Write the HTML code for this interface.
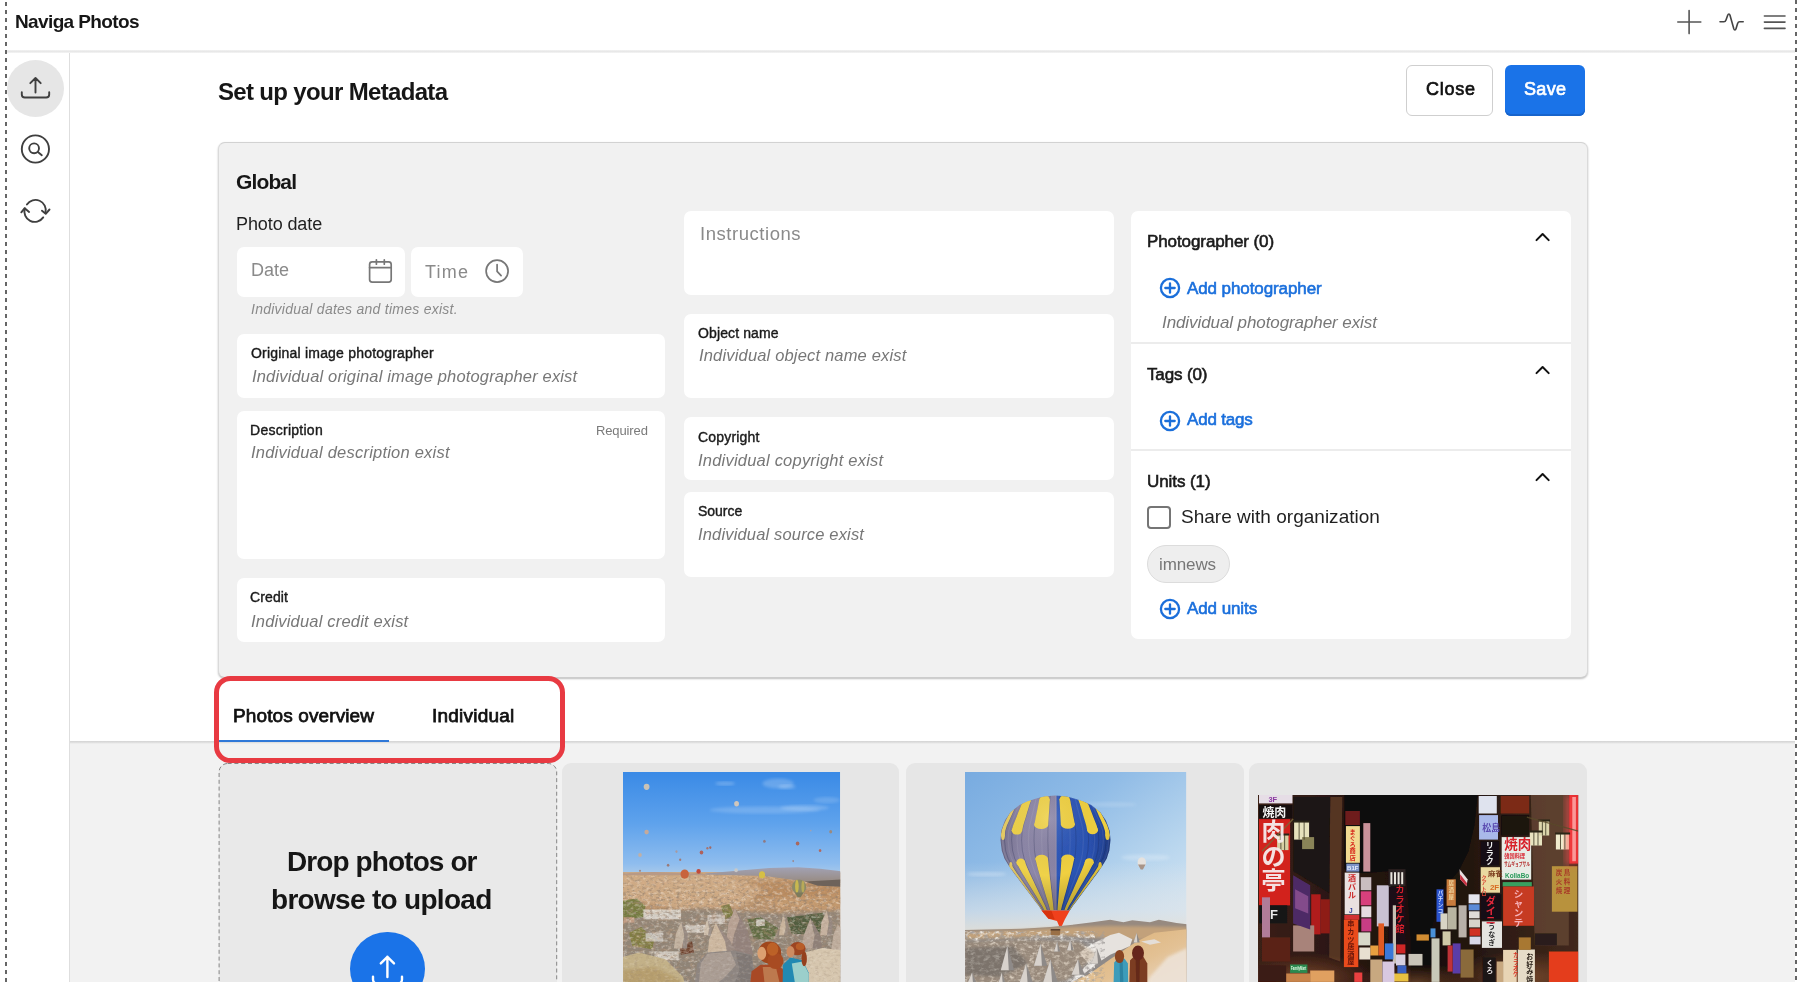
<!DOCTYPE html>
<html lang="en"><head><meta charset="utf-8"><title>Naviga Photos</title>
<style>
*{box-sizing:border-box;margin:0;padding:0}
html,body{width:1798px;height:982px;overflow:hidden;background:#fff}
body{position:relative;font-family:"Liberation Sans","Noto Sans CJK JP",sans-serif;color:#1f1f1f}
.t{position:absolute;white-space:nowrap;line-height:1;display:block;will-change:transform}
.b{position:absolute}
.w{position:absolute;background:#fff;border-radius:7px}
svg{position:absolute;overflow:visible}
</style></head>
<body>
<!-- chrome -->
<div class="b" style="left:0px;top:0px;width:1798px;height:50px;background:#fff"></div><div class="b" style="left:7px;top:50px;width:1788px;height:3px;background:linear-gradient(#f3f3f3,#e7e7e7 45%,#e9e9e9 60%,#f6f6f6)"></div><span class="t" id="title" style="left:14.80px;top:11.96px;font-size:19px;color:#161616;font-weight:700;letter-spacing:-0.624px;">Naviga Photos</span><div class="b" style="left:69px;top:53px;width:1px;height:929px;background:#dedede"></div><div class="b" style="left:7.3px;top:59.7px;width:57px;height:57px;background:#e6e6e6;border-radius:50%"></div><svg style="left:20px;top:76px" width="31" height="24" viewBox="0 0 31 24" fill="none" stroke="#3f3f3f" stroke-width="1.9" stroke-linecap="round" stroke-linejoin="round"><path d="M15.5 16.5V2.2M10.3 7.2l5.2-5.2 5.2 5.2M1.8 16.3v2.2a3 3 0 0 0 3 3h21.4a3 3 0 0 0 3-3v-2.2"/></svg><svg style="left:20px;top:134px" width="30" height="30" viewBox="0 0 30 30" fill="none" stroke="#3f3f3f" stroke-width="1.9" stroke-linecap="round"><circle cx="15.4" cy="15" r="13.6"/><circle cx="14.1" cy="14.3" r="4.9"/><path d="M17.9 18l3.9 3.2"/></svg><svg style="left:20px;top:198px" width="31" height="25" viewBox="0 0 31 25" fill="none" stroke="#3f3f3f" stroke-width="1.9" stroke-linecap="round" stroke-linejoin="round"><path d="M6.9 6.5A10.3 10.3 0 0 1 25.5 14.6M23.2 19.4A10.3 10.3 0 0 1 4.9 10.4"/><path d="M22 12.7l3.7 3.1 3.8-4.3M1.3 14.3l3.4-4.1 4.4 3.7"/></svg><svg style="left:1676px;top:9px" width="27" height="27" viewBox="0 0 27 27" fill="none" stroke="#555" stroke-width="1.6" stroke-linecap="round"><path d="M13.1 1.6v23M1.8 13h23"/></svg><svg style="left:1718px;top:11px" width="28" height="22" viewBox="0 0 28 22" fill="none" stroke="#444" stroke-width="1.6" stroke-linecap="round" stroke-linejoin="round"><path d="M2 10.8h3.9c1.2 0 1.7-.6 2.1-1.8l1.7-4.8c.6-1.6 1.8-1.6 2.3 0l3.8 13.6c.5 1.6 1.7 1.6 2.2 0l1.6-5.2c.4-1.2.9-1.8 2-1.8h3.6"/></svg><svg style="left:1762px;top:13px" width="26" height="18" viewBox="0 0 26 18" fill="none" stroke="#555" stroke-width="1.6" stroke-linecap="round"><path d="M2.4 3h20.6M2.4 9.1h20.6M2.4 15.4h20.6"/></svg><span class="t" id="h1" style="left:217.80px;top:79.60px;font-size:24px;color:#161616;font-weight:700;letter-spacing:-0.669px;">Set up your Metadata</span><div class="b" style="left:1406px;top:65px;width:86.5px;height:51px;background:#fff;border:1px solid #cfcfcf;border-radius:6px"></div><span class="t" id="close" style="left:1425.60px;top:80.35px;font-size:18px;color:#111;letter-spacing:0.742px;-webkit-text-stroke:0.7px #111;">Close</span><div class="b" style="left:1505px;top:65px;width:80px;height:51px;background:#1a73e8;border-radius:6px;box-shadow:inset 0 -2px 0 #1764cc"></div><span class="t" id="save" style="left:1524.20px;top:80.35px;font-size:18px;color:#fff;letter-spacing:0.323px;-webkit-text-stroke:0.7px #fff;">Save</span>
<!-- panel -->
<div class="b" style="left:218px;top:141.5px;width:1369.5px;height:536.7px;background:#f1f1f1;border:1px solid #dadada;border-top-color:#d2d2d2;border-bottom-color:#cdcdcd;border-radius:7px;box-shadow:0 1px 2px rgba(0,0,0,.26)"></div><span class="t" id="global" style="left:236.30px;top:171.48px;font-size:21px;color:#161616;font-weight:700;letter-spacing:-0.869px;">Global</span><span class="t" id="photodate" style="left:236.30px;top:215.25px;font-size:18px;color:#1f1f1f;letter-spacing:-0.098px;">Photo date</span><div class="w" style="left:237px;top:247.3px;width:168.2px;height:49.9px;"></div><span class="t" id="date" style="left:250.70px;top:260.95px;font-size:18px;color:#8a8a8a;letter-spacing:0.023px;">Date</span><svg style="left:368px;top:258px" width="25" height="26" viewBox="0 0 25 26" fill="none" stroke="#777" stroke-width="1.7" stroke-linecap="round" stroke-linejoin="round"><rect x="1.6" y="3.8" width="21.6" height="20.4" rx="2.6"/><path d="M1.6 9.6h21.6M8.4 1.8v4.4M16.3 1.8v4.4"/></svg><div class="w" style="left:410.8px;top:247.3px;width:111.8px;height:49.9px;"></div><span class="t" id="time" style="left:425.10px;top:262.55px;font-size:18px;color:#8a8a8a;letter-spacing:1.219px;">Time</span><svg style="left:484px;top:258px" width="26" height="26" viewBox="0 0 26 26" fill="none" stroke="#777" stroke-width="1.7" stroke-linecap="round" stroke-linejoin="round"><circle cx="13.1" cy="13.1" r="11"/><path d="M13.1 6.6v6.8l4 4.2"/></svg><span class="t" id="helper" style="left:250.70px;top:301.72px;font-size:14px;color:#8a8a8a;font-style:italic;letter-spacing:0.255px;">Individual dates and times exist.</span><div class="w" style="left:237px;top:334.4px;width:428.2px;height:63.4px;"></div><span class="t" id="l_orig" style="left:250.70px;top:346.42px;font-size:14px;color:#1a1a1a;letter-spacing:0.202px;-webkit-text-stroke:0.4px #1a1a1a;">Original image photographer</span><span class="t" id="v_orig" style="left:251.60px;top:368.19px;font-size:16.5px;color:#777;font-style:italic;letter-spacing:0.159px;">Individual original image photographer exist</span><div class="w" style="left:237px;top:410.8px;width:428.2px;height:148.1px;"></div><span class="t" id="l_desc" style="left:250.30px;top:422.72px;font-size:14px;color:#1a1a1a;letter-spacing:0.267px;-webkit-text-stroke:0.4px #1a1a1a;">Description</span><span class="t" id="req" style="left:595.80px;top:424.31px;font-size:13px;color:#7a7a7a;letter-spacing:-0.124px;">Required</span><span class="t" id="v_desc" style="left:251.30px;top:444.09px;font-size:16.5px;color:#777;font-style:italic;letter-spacing:0.218px;">Individual description exist</span><div class="w" style="left:237px;top:577.8px;width:428.2px;height:64.2px;"></div><span class="t" id="l_cred" style="left:250.30px;top:590.12px;font-size:14px;color:#1a1a1a;letter-spacing:0.108px;-webkit-text-stroke:0.4px #1a1a1a;">Credit</span><span class="t" id="v_cred" style="left:251.30px;top:613.29px;font-size:16.5px;color:#777;font-style:italic;letter-spacing:0.183px;">Individual credit exist</span><div class="w" style="left:684px;top:211.2px;width:430.2px;height:83.9px;"></div><span class="t" id="instr" style="left:700.30px;top:224.81px;font-size:18.5px;color:#8a8a8a;letter-spacing:0.545px;">Instructions</span><div class="w" style="left:684px;top:313.9px;width:430.2px;height:84.5px;"></div><span class="t" id="l_obj" style="left:697.90px;top:326.12px;font-size:14px;color:#1a1a1a;letter-spacing:0.113px;-webkit-text-stroke:0.4px #1a1a1a;">Object name</span><span class="t" id="v_obj" style="left:699.00px;top:347.09px;font-size:16.5px;color:#777;font-style:italic;letter-spacing:0.170px;">Individual object name exist</span><div class="w" style="left:684px;top:417.1px;width:430.2px;height:63.2px;"></div><span class="t" id="l_copy" style="left:697.90px;top:429.52px;font-size:14px;color:#1a1a1a;letter-spacing:0.185px;-webkit-text-stroke:0.4px #1a1a1a;">Copyright</span><span class="t" id="v_copy" style="left:698.20px;top:451.79px;font-size:16.5px;color:#777;font-style:italic;letter-spacing:0.213px;">Individual copyright exist</span><div class="w" style="left:684px;top:492.1px;width:430.2px;height:84.5px;"></div><span class="t" id="l_src" style="left:697.90px;top:504.42px;font-size:14px;color:#1a1a1a;letter-spacing:-0.012px;-webkit-text-stroke:0.4px #1a1a1a;">Source</span><span class="t" id="v_src" style="left:698.30px;top:526.49px;font-size:16.5px;color:#777;font-style:italic;letter-spacing:0.162px;">Individual source exist</span><div class="w" style="left:1131.2px;top:210.7px;width:439.4px;height:428.2px;"></div><div class="b" style="left:1131.2px;top:342px;width:439.4px;height:1.6px;background:#ececec"></div><div class="b" style="left:1131.2px;top:449px;width:439.4px;height:1.6px;background:#ececec"></div><span class="t" id="h_ph" style="left:1146.50px;top:232.94px;font-size:17px;color:#1a1a1a;letter-spacing:-0.095px;-webkit-text-stroke:0.6px #1a1a1a;">Photographer (0)</span><svg style="left:1534px;top:231.4px" width="17" height="11" viewBox="0 0 17 11" fill="none" stroke="#111" stroke-width="2" stroke-linecap="round" stroke-linejoin="round"><path d="M2.5 9.1l6.1-6.1 6.1 6.1"/></svg><svg style="left:1158.8px;top:277px" width="22" height="22" viewBox="0 0 22 22" fill="none" stroke="#1b6fda" stroke-width="2.3" stroke-linecap="round"><circle cx="11" cy="11" r="9.1"/><path d="M11 6.3v9.4M6.3 11h9.4"/></svg><span class="t" id="a_ph" style="left:1186.60px;top:279.84px;font-size:17px;color:#1a6fdc;letter-spacing:-0.094px;-webkit-text-stroke:0.6px #1a6fdc;">Add photographer</span><span class="t" id="v_ph" style="left:1162.00px;top:314.14px;font-size:17px;color:#777;font-style:italic;letter-spacing:-0.088px;">Individual photographer exist</span><span class="t" id="h_tags" style="left:1146.50px;top:365.64px;font-size:17px;color:#1a1a1a;letter-spacing:-0.146px;-webkit-text-stroke:0.6px #1a1a1a;">Tags (0)</span><svg style="left:1534px;top:364.2px" width="17" height="11" viewBox="0 0 17 11" fill="none" stroke="#111" stroke-width="2" stroke-linecap="round" stroke-linejoin="round"><path d="M2.5 9.1l6.1-6.1 6.1 6.1"/></svg><svg style="left:1158.8px;top:409.8px" width="22" height="22" viewBox="0 0 22 22" fill="none" stroke="#1b6fda" stroke-width="2.3" stroke-linecap="round"><circle cx="11" cy="11" r="9.1"/><path d="M11 6.3v9.4M6.3 11h9.4"/></svg><span class="t" id="a_tags" style="left:1186.60px;top:411.44px;font-size:17px;color:#1a6fdc;letter-spacing:-0.201px;-webkit-text-stroke:0.6px #1a6fdc;">Add tags</span><span class="t" id="h_units" style="left:1146.50px;top:473.34px;font-size:17px;color:#1a1a1a;letter-spacing:-0.079px;-webkit-text-stroke:0.6px #1a1a1a;">Units (1)</span><svg style="left:1534px;top:471.4px" width="17" height="11" viewBox="0 0 17 11" fill="none" stroke="#111" stroke-width="2" stroke-linecap="round" stroke-linejoin="round"><path d="M2.5 9.1l6.1-6.1 6.1 6.1"/></svg><div class="b" style="left:1147.2px;top:506.2px;width:23.6px;height:22.8px;border:2px solid #757575;border-radius:4px;background:#fff"></div><span class="t" id="share" style="left:1180.70px;top:507.36px;font-size:19px;color:#1f1f1f;letter-spacing:0.015px;">Share with organization</span><div class="b" style="left:1147.3px;top:544.9px;width:82.4px;height:38px;background:#eee;border:1px solid #dcdcdc;border-radius:19px"></div><span class="t" id="chip" style="left:1158.80px;top:556.14px;font-size:17px;color:#777;letter-spacing:-0.105px;">imnews</span><svg style="left:1158.8px;top:598.2px" width="22" height="22" viewBox="0 0 22 22" fill="none" stroke="#1b6fda" stroke-width="2.3" stroke-linecap="round"><circle cx="11" cy="11" r="9.1"/><path d="M11 6.3v9.4M6.3 11h9.4"/></svg><span class="t" id="a_units" style="left:1186.60px;top:599.84px;font-size:17px;color:#1a6fdc;letter-spacing:-0.086px;-webkit-text-stroke:0.6px #1a6fdc;">Add units</span>
<!-- bottom -->
<div class="b" style="left:70px;top:742px;width:1725px;height:240px;background:#f2f2f2"></div><div class="b" style="left:70px;top:741px;width:1725px;height:3.4px;background:linear-gradient(#d4d4d4,#dcdcdc 40%,#e9e9e9 75%,#f2f2f2)"></div><span class="t" id="tab1" style="left:233.00px;top:706.26px;font-size:19px;color:#111;letter-spacing:0.114px;-webkit-text-stroke:0.75px #111;">Photos overview</span><span class="t" id="tab2" style="left:431.90px;top:706.26px;font-size:19px;color:#111;letter-spacing:0.213px;-webkit-text-stroke:0.75px #111;">Individual</span><div class="b" style="left:218.6px;top:739.6px;width:170.1px;height:2px;background:#2f78d8"></div><div class="b" style="left:214.2px;top:675.9px;width:350.7px;height:86.9px;border:5px solid #e83a42;border-radius:16.5px"></div><div class="b" style="left:218.6px;top:763.4px;width:338.6px;height:230px;background:#e9e9e9;border-radius:9px"></div><svg style="left:218px;top:763px" width="340" height="230" viewBox="0 0 340 230" fill="none"><rect x="1.1" y="0.5" width="337.6" height="240" rx="8.5" stroke="#858585" stroke-width="1" stroke-dasharray="4 2.8"/></svg><span class="t" id="drop1" style="left:286.90px;top:847.94px;font-size:28px;color:#161616;font-weight:700;letter-spacing:-0.900px;">Drop photos or</span><span class="t" id="drop2" style="left:271.20px;top:886.34px;font-size:28px;color:#161616;font-weight:700;letter-spacing:-0.699px;">browse to upload</span><div class="b" style="left:350.3px;top:931.9px;width:74.5px;height:74.5px;background:#1a73e8;border-radius:50%"></div><svg style="left:370px;top:954px" width="35" height="34" viewBox="0 0 35 34" fill="none" stroke="#fff" stroke-width="2.4" stroke-linecap="round" stroke-linejoin="round"><path d="M17.4 23V2.8M10.8 9.4l6.6-6.6 6.6 6.6M3 22.6v3a4 4 0 0 0 4 4h21a4 4 0 0 0 4-4v-3"/></svg><div class="b" style="left:561.7px;top:763px;width:337.8px;height:230px;background:#e6e6e6;border-radius:9px"></div><div class="b" style="left:906.2px;top:763px;width:337.8px;height:230px;background:#e6e6e6;border-radius:9px"></div><div class="b" style="left:1249.2px;top:763px;width:337.8px;height:230px;background:#e6e6e6;border-radius:9px"></div>
<!-- photos -->
<svg style="left:622.8px;top:772.3px" width="217.2" height="215" viewBox="0 0 217.2 215"><defs>
<linearGradient id="p1sky" x1="0" y1="0" x2="0" y2="1"><stop offset="0" stop-color="#3a8ae6"/><stop offset=".5" stop-color="#5ea2ec"/><stop offset=".9" stop-color="#8fbdee"/><stop offset="1" stop-color="#a8c9ea"/></linearGradient>
<linearGradient id="p1town" x1="0" y1="0" x2="0" y2="1"><stop offset="0" stop-color="#caa47c"/><stop offset=".5" stop-color="#b08a66"/><stop offset="1" stop-color="#8e7c6a"/></linearGradient>
<linearGradient id="p1hill" x1="0" y1="0" x2="0" y2="1"><stop offset="0" stop-color="#a2a2b4"/><stop offset="1" stop-color="#97897e"/></linearGradient>
<filter id="p1n" x="0" y="0" width="100%" height="100%"><feTurbulence type="fractalNoise" baseFrequency=".22 .34" numOctaves="3" seed="7"/><feColorMatrix values="0 0 0 0 .98  0 0 0 0 .93  0 0 0 0 .86  0 0 0 2.6 -1.25"/><feGaussianBlur stdDeviation=".3"/></filter>
<filter id="p1d" x="0" y="0" width="100%" height="100%"><feTurbulence type="fractalNoise" baseFrequency=".26 .4" numOctaves="3" seed="21"/><feColorMatrix values="0 0 0 0 .3  0 0 0 0 .22  0 0 0 0 .16  0 0 0 2.6 -1.3"/><feGaussianBlur stdDeviation=".3"/></filter>
<filter id="p1o" x="0" y="0" width="100%" height="100%"><feTurbulence type="fractalNoise" baseFrequency=".18 .3" numOctaves="2" seed="4"/><feColorMatrix values="0 0 0 0 .78  0 0 0 0 .45  0 0 0 0 .25  0 0 0 2.4 -1.2"/><feGaussianBlur stdDeviation=".4"/></filter>
<filter id="b3"><feGaussianBlur stdDeviation=".35"/></filter>
<filter id="b8"><feGaussianBlur stdDeviation="1.6"/></filter>
<clipPath id="p1c"><rect width="217.2" height="215"/></clipPath>
</defs><g clip-path="url(#p1c)"><rect width="217.2" height="102" fill="url(#p1sky)"/><ellipse cx="102.1" cy="11.5" rx="9.9" ry="2.0" fill="#fff" opacity="0.22" filter="url(#b8)"/><ellipse cx="155.1" cy="11.5" rx="15.5" ry="4.9" fill="#fff" opacity="0.2" filter="url(#b8)"/><ellipse cx="164.0" cy="14.8" rx="8.8" ry="2.2" fill="#fff" opacity="0.22" filter="url(#b8)"/><ellipse cx="141.9" cy="38.0" rx="55.2" ry="3.5" fill="#fff" opacity="0.17" filter="url(#b8)"/><ellipse cx="181.7" cy="35.8" rx="24.3" ry="2.7" fill="#fff" opacity="0.2" filter="url(#b8)"/><ellipse cx="203.8" cy="28.1" rx="13.3" ry="3.1" fill="#fff" opacity="0.15" filter="url(#b8)"/><rect x="0.0" y="100.1" width="218.1" height="113.6" fill="url(#p1town)" /><polygon points="110.9,112.0 164.0,107.6 218.1,114.3 218.1,134.1 168.4,129.7 119.8,125.3" fill="#b88a5e" filter="url(#b8)" opacity=".85"/><polygon points="141.9,125.3 218.1,123.1 218.1,138.6 155.1,136.4" fill="#c49a70" filter="url(#b8)" opacity=".8"/><polygon points="0.0,103.2 97.7,103.2 141.9,116.5 119.8,134.1 53.5,136.4 0.0,125.3" fill="#d2b08c" filter="url(#b8)" opacity=".7"/><polygon points="0.0,143.0 75.6,136.4 155.1,140.8 218.1,138.6 218.1,213.7 0.0,213.7" fill="#8f867c" filter="url(#b8)" opacity=".85"/><polygon points="0.0,128.6 13.7,126.4 22.5,134.1 20.3,145.2 0.0,147.4" fill="#6f7a3c" filter="url(#b3)" opacity=".9"/><polygon points="6.0,160.7 18.1,155.1 31.4,167.3 29.2,177.2 9.3,173.9" fill="#7d7c3c" filter="url(#b3)" opacity=".9"/><polygon points="164.0,145.2 199.3,140.8 208.2,151.8 199.3,162.9 168.4,161.8" fill="#4d5a3a" filter="url(#b3)" opacity=".9"/><polygon points="124.2,147.4 137.5,145.2 155.1,156.2 150.7,167.3 130.8,167.3" fill="#5c6a40" filter="url(#b3)" opacity=".9"/><polygon points="97.7,134.1 106.5,131.9 110.9,143.0 102.1,147.4" fill="#7a7a40" filter="url(#b3)" opacity=".9"/><polygon points="55.7,171.7 69.0,169.5 71.2,180.6 57.9,182.8" fill="#6a3a28" filter="url(#b3)" opacity=".9"/><rect x="20.3" y="137.5" width="37.6" height="9.9" fill="#dcd8d0" filter="url(#b3)" opacity=".85"/><rect x="22.5" y="160.7" width="17.7" height="8.8" fill="#d0ccc6" filter="url(#b3)" opacity=".85"/><rect x="62.3" y="152.9" width="19.9" height="7.7" fill="#d6d0c8" filter="url(#b3)" opacity=".85"/><rect x="31.4" y="179.4" width="24.3" height="8.8" fill="#d8d2c8" filter="url(#b3)" opacity=".85"/><rect x="133.0" y="147.4" width="8.8" height="6.6" fill="#d8d4cc" filter="url(#b3)" opacity=".85"/><rect x="84.4" y="143.0" width="17.7" height="8.8" fill="#d0c8c0" filter="url(#b3)" opacity=".85"/><rect x="0.4" y="145.2" width="11.0" height="5.5" fill="#c8a088" filter="url(#b3)" opacity=".85"/><rect y="101" width="217.2" height="114" filter="url(#p1o)" opacity=".38"/><rect y="101" width="217.2" height="114" filter="url(#p1n)" opacity=".35"/><rect y="101" width="217.2" height="114" filter="url(#p1d)" opacity=".7"/><polygon points="82.2,101.4 119.8,98.3 146.3,96.1 175.0,95.2 197.1,96.8 218.1,99.2 218.1,110.9 181.7,109.4 141.9,103.9 82.2,102.5" fill="url(#p1hill)" filter="url(#b3)"/><polygon points="181.7,109.4 218.1,107.6 218.1,114.7 194.9,113.8" fill="#6d625a" filter="url(#b3)"/><polygon points="0.0,101.4 31.4,100.1 53.5,101.0 82.2,101.9 82.2,103.2 0.0,103.2" fill="#b89a86" /><polygon points="112.0,135.9 124.2,157.3 130.4,182.8 107.6,182.8 110.9,162.9 116.5,147.4" fill="#93827c" filter="url(#b3)"/><polygon points="112.0,135.9 116.5,147.4 110.9,162.9 107.6,180.6 103.2,169.5 105.4,151.8" fill="#b8a294" filter="url(#b3)"/><polygon points="92.8,150.7 107.6,169.5 113.1,182.8 104.3,182.8 102.1,169.5" fill="#9a8a82" filter="url(#b3)"/><polygon points="92.8,150.7 102.1,169.5 104.3,182.8 84.4,183.2 86.2,167.3" fill="#cdb8a0" filter="url(#b3)"/><polygon points="58.3,150.1 65.0,161.8 64.1,176.6 59.0,176.6 61.2,162.9" fill="#978a82" filter="url(#b3)"/><polygon points="58.3,150.1 61.2,162.9 59.0,176.6 50.8,176.6 53.0,161.8" fill="#c4b4a2" filter="url(#b3)"/><polygon points="84.4,147.4 88.8,156.7 88.0,163.3 84.9,163.3 86.2,156.2" fill="#a0948c" filter="url(#b3)"/><polygon points="84.4,147.4 86.2,156.2 84.9,163.3 80.9,163.3 81.3,156.2" fill="#cfc0ae" filter="url(#b3)"/><polygon points="160.9,143.0 165.3,154.5 164.4,163.3 160.9,163.3 162.7,155.1" fill="#9c8c80" filter="url(#b3)"/><polygon points="160.9,143.0 162.7,155.1 160.9,163.3 156.0,163.3 157.3,154.0" fill="#c9b49c" filter="url(#b3)"/><polygon points="187.4,146.3 197.6,163.3 198.9,176.6 189.4,176.6 191.6,162.9" fill="#8f8078" filter="url(#b3)"/><polygon points="187.4,146.3 191.6,162.9 189.4,176.6 179.0,176.6 180.8,162.9" fill="#b8a698" filter="url(#b3)"/><polygon points="203.8,138.6 209.5,150.1 208.6,163.3 203.8,163.3 206.0,150.1" fill="#968880" filter="url(#b3)"/><polygon points="203.8,138.6 206.0,150.1 203.8,163.3 197.1,163.3 198.5,150.1" fill="#c6b2a0" filter="url(#b3)"/><polygon points="217.0,155.1 218.1,158.5 218.1,178.3 215.9,178.3" fill="#95877f" filter="url(#b3)"/><polygon points="214.8,151.8 218.1,158.5 218.1,178.3 208.2,178.3 210.4,162.9" fill="#bfae9e" filter="url(#b3)"/><polygon points="71.2,213.7 74.5,191.6 84.4,180.6 110.9,178.3 128.6,182.8 134.1,213.7" fill="#8e8682" filter="url(#b3)"/><polygon points="84.4,181.7 107.6,179.4 113.1,192.7 102.1,204.9 91.0,213.7 75.6,213.7 77.8,191.6" fill="#ada096" filter="url(#b3)" opacity=".9"/><polygon points="113.1,180.6 128.6,183.2 133.0,213.7 110.9,213.7 116.5,198.2" fill="#7f7874" filter="url(#b3)"/><polygon points="0.0,185.0 15.9,180.6 42.4,187.2 60.1,204.9 62.3,213.7 0.0,213.7" fill="#c3b188" filter="url(#b3)"/><polygon points="0.0,198.2 31.4,194.9 57.9,208.2 57.9,213.7 0.0,213.7" fill="#b39a68" filter="url(#b8)" opacity=".8"/><polygon points="181.7,180.6 199.3,176.1 218.1,178.3 218.1,213.7 181.7,213.7" fill="#d6c6ae" filter="url(#b3)"/><rect y="118" width="217.2" height="97" filter="url(#p1n)" opacity=".18"/><rect y="118" width="217.2" height="97" filter="url(#p1d)" opacity=".3"/><polygon points="126.9,213.7 128.6,199.3 137.5,192.7 155.1,192.7 164.0,201.5 165.7,213.7" fill="#a84a28" filter="url(#b3)"/><polygon points="139.7,194.9 152.9,194.9 157.3,213.7 141.9,213.7" fill="#c48a5c" filter="url(#b3)" opacity=".75"/><polygon points="159.6,213.7 160.0,192.7 167.3,185.4 179.4,188.3 185.6,200.4 185.6,213.7" fill="#2089b2" filter="url(#b3)"/><polygon points="168.8,191.6 179.9,189.4 185.6,201.5 185.6,213.7 172.4,213.7" fill="#a9d8ce" filter="url(#b3)" opacity=".9"/><ellipse cx="146.7" cy="180.6" rx="11.5" ry="11.0" fill="#a0461e" filter="url(#b3)"/><ellipse cx="152.5" cy="189.0" rx="8.0" ry="8.0" fill="#a84c20" filter="url(#b3)"/><ellipse cx="149.6" cy="177.2" rx="5.7" ry="6.6" fill="#c4682c" filter="url(#b3)" opacity=".8"/><ellipse cx="138.8" cy="181.4" rx="4.4" ry="6.6" fill="#dca070" filter="url(#b3)"/><ellipse cx="174.6" cy="176.6" rx="8.0" ry="6.6" fill="#9c4420" filter="url(#b3)"/><ellipse cx="177.2" cy="174.4" rx="4.4" ry="3.5" fill="#c0642c" filter="url(#b3)" opacity=".8"/><ellipse cx="181.2" cy="186.7" rx="2.7" ry="7.5" fill="#94401e" filter="url(#b3)"/><ellipse cx="167.5" cy="179.7" rx="4.0" ry="5.7" fill="#cc8c62" filter="url(#b3)"/><ellipse cx="23.6" cy="14.8" rx="2.9" ry="3.1" fill="#c9c2b6" filter="url(#b3)"/><ellipse cx="113.6" cy="31.8" rx="2.4" ry="2.7" fill="#cfc6bc" filter="url(#b3)"/><ellipse cx="23.6" cy="60.1" rx="2.2" ry="2.4" fill="#c4aa9c" filter="url(#b3)"/><ellipse cx="17.0" cy="82.9" rx="1.8" ry="2.0" fill="#c0b0a6" filter="url(#b3)"/><ellipse cx="53.5" cy="79.6" rx="1.1" ry="1.3" fill="#a89aa0" filter="url(#b3)"/><ellipse cx="57.2" cy="87.7" rx="1.1" ry="1.3" fill="#a07a78" filter="url(#b3)"/><ellipse cx="45.1" cy="93.3" rx="1.3" ry="1.5" fill="#9a7a78" filter="url(#b3)"/><ellipse cx="78.5" cy="80.4" rx="1.8" ry="2.0" fill="#b0625c" filter="url(#b3)"/><ellipse cx="84.4" cy="76.2" rx="1.1" ry="1.3" fill="#a8746e" filter="url(#b3)"/><ellipse cx="87.3" cy="75.6" rx="1.1" ry="1.3" fill="#a06a68" filter="url(#b3)"/><ellipse cx="141.4" cy="69.2" rx="1.3" ry="1.5" fill="#8e7a84" filter="url(#b3)"/><ellipse cx="174.6" cy="71.4" rx="1.8" ry="2.0" fill="#a8685e" filter="url(#b3)"/><ellipse cx="197.1" cy="78.5" rx="1.3" ry="1.5" fill="#b06a62" filter="url(#b3)"/><ellipse cx="207.7" cy="59.7" rx="1.5" ry="1.8" fill="#9a8a80" filter="url(#b3)"/><ellipse cx="187.8" cy="58.6" rx="0.7" ry="0.9" fill="#a8a0a8" filter="url(#b3)"/><ellipse cx="170.2" cy="89.1" rx="0.9" ry="1.1" fill="#9a8a90" filter="url(#b3)"/><ellipse cx="17.0" cy="98.8" rx="1.1" ry="1.1" fill="#a08a88" filter="url(#b3)"/><ellipse cx="113.1" cy="98.3" rx="1.8" ry="2.0" fill="#c8c8c8" filter="url(#b3)"/><ellipse cx="75.6" cy="99.4" rx="2.2" ry="2.4" fill="#c0483a" filter="url(#b3)"/><ellipse cx="61.7" cy="102.1" rx="4.2" ry="4.6" fill="#c8643c" filter="url(#b3)"/><ellipse cx="139.0" cy="102.8" rx="3.1" ry="3.5" fill="#d6bf44" filter="url(#b3)"/><ellipse cx="176.1" cy="114.9" rx="7.1" ry="7.3" fill="#8c8a68" filter="url(#b3)"/><ellipse cx="173.9" cy="114.3" rx="1.8" ry="6.6" fill="#c8b850" filter="url(#b3)"/><ellipse cx="179.9" cy="114.7" rx="1.5" ry="6.2" fill="#b8aa58" filter="url(#b3)"/><polygon points="171.7,120.4 180.6,120.4 177.7,125.3 174.6,125.3" fill="#7c7a5c" /></g></svg><svg style="left:964.6px;top:772.3px" width="221.4" height="215" viewBox="0 0 221.4 215"><defs>
<linearGradient id="p2sky" x1="0" y1="0" x2="1" y2="1" gradientUnits="objectBoundingBox"><stop offset="0" stop-color="#78abe0"/><stop offset=".35" stop-color="#8fbbe6"/><stop offset=".7" stop-color="#b9d6ee"/><stop offset="1" stop-color="#dbe9f4"/></linearGradient>
<linearGradient id="p2haze" x1="0" y1="0" x2="0" y2="1"><stop offset="0" stop-color="#e4e6e6" stop-opacity="0"/><stop offset=".7" stop-color="#dde3e8" stop-opacity=".6"/><stop offset="1" stop-color="#e2dfd8" stop-opacity=".9"/></linearGradient>
<linearGradient id="p2env" x1="0" y1="0" x2="1" y2="0"><stop offset="0" stop-color="#77728f"/><stop offset=".2" stop-color="#8d87a8"/><stop offset=".505" stop-color="#8a84a6"/><stop offset=".515" stop-color="#2d58ba"/><stop offset=".8" stop-color="#2a52b2"/><stop offset="1" stop-color="#223f8c"/></linearGradient>
<radialGradient id="p2sh" cx=".45" cy=".2" r=".9"><stop offset="0" stop-color="#fff" stop-opacity=".12"/><stop offset=".55" stop-color="#000" stop-opacity="0"/><stop offset="1" stop-color="#000" stop-opacity=".3"/></radialGradient>
<linearGradient id="p2gold" x1="0" y1="0" x2="1" y2="1"><stop offset="0" stop-color="#d9ad70"/><stop offset=".6" stop-color="#e3c194"/><stop offset="1" stop-color="#ecdccb"/></linearGradient>
<filter id="p2n" x="0" y="0" width="100%" height="100%"><feTurbulence type="fractalNoise" baseFrequency=".2 .3" numOctaves="3" seed="11"/><feColorMatrix values="0 0 0 0 .95  0 0 0 0 .94  0 0 0 0 .92  0 0 0 2.8 -1.3"/><feGaussianBlur stdDeviation=".35"/></filter>
<filter id="p2d" x="0" y="0" width="100%" height="100%"><feTurbulence type="fractalNoise" baseFrequency=".2 .3" numOctaves="3" seed="31"/><feColorMatrix values="0 0 0 0 .36  0 0 0 0 .34  0 0 0 0 .33  0 0 0 2.8 -1.35"/><feGaussianBlur stdDeviation=".35"/></filter>
<clipPath id="p2c"><rect width="221.4" height="215"/></clipPath>
</defs><g clip-path="url(#p2c)"><rect width="221.4" height="160" fill="url(#p2sky)"/><rect y="90" width="221.4" height="68" fill="url(#p2haze)"/><ellipse cx="21.4" cy="102.1" rx="19.9" ry="2.2" fill="#fff" opacity="0.25" filter="url(#b8)"/><ellipse cx="180.6" cy="85.5" rx="24.3" ry="3.1" fill="#fff" opacity="0.22" filter="url(#b8)"/><ellipse cx="145.2" cy="32.5" rx="26.5" ry="2.2" fill="#fff" opacity="0.15" filter="url(#b8)"/><clipPath id="p2e"><polygon points="90.3,23.5 84.2,24.1 79.6,24.6 75.0,25.6 69.7,26.9 65.5,28.4 61.3,29.9 57.9,31.4 54.5,33.0 49.9,36.8 45.3,40.6 42.7,44.4 40.0,48.3 38.1,53.6 36.2,58.9 35.9,63.5 35.5,68.1 36.1,73.5 36.8,78.8 38.1,82.6 39.4,86.4 41.7,90.3 44.0,94.1 46.7,97.9 49.4,101.7 52.3,105.5 55.2,109.4 58.1,113.2 60.9,117.0 63.8,120.8 66.6,124.6 70.1,129.2 73.7,133.8 76.7,138.4 104.8,138.4 107.9,133.8 111.4,129.2 114.9,124.6 117.7,120.8 120.5,117.0 123.3,113.2 126.1,109.4 129.0,105.5 131.9,101.7 134.5,97.9 137.2,94.1 139.5,90.3 141.8,86.4 143.0,82.6 144.3,78.8 144.9,73.5 145.5,68.1 145.1,63.5 144.7,58.9 142.8,53.6 140.8,48.3 138.1,44.4 135.5,40.6 130.9,36.8 126.3,33.0 122.8,31.4 119.4,29.9 115.2,28.4 111.0,26.9 105.7,25.6 101.0,24.6 96.4,24.1 90.3,23.5"/></clipPath><g filter="url(#b3)"><polygon points="90.3,23.5 84.2,24.1 79.6,24.6 75.0,25.6 69.7,26.9 65.5,28.4 61.3,29.9 57.9,31.4 54.5,33.0 49.9,36.8 45.3,40.6 42.7,44.4 40.0,48.3 38.1,53.6 36.2,58.9 35.9,63.5 35.5,68.1 36.1,73.5 36.8,78.8 38.1,82.6 39.4,86.4 41.7,90.3 44.0,94.1 46.7,97.9 49.4,101.7 52.3,105.5 55.2,109.4 58.1,113.2 60.9,117.0 63.8,120.8 66.6,124.6 70.1,129.2 73.7,133.8 76.7,138.4 104.8,138.4 107.9,133.8 111.4,129.2 114.9,124.6 117.7,120.8 120.5,117.0 123.3,113.2 126.1,109.4 129.0,105.5 131.9,101.7 134.5,97.9 137.2,94.1 139.5,90.3 141.8,86.4 143.0,82.6 144.3,78.8 144.9,73.5 145.5,68.1 145.1,63.5 144.7,58.9 142.8,53.6 140.8,48.3 138.1,44.4 135.5,40.6 130.9,36.8 126.3,33.0 122.8,31.4 119.4,29.9 115.2,28.4 111.0,26.9 105.7,25.6 101.0,24.6 96.4,24.1 90.3,23.5" fill="url(#p2env)"/><g clip-path="url(#p2e)"><polyline points="53.2,23.5 52.9,24.1 52.7,24.6 52.2,25.6 51.6,26.9 50.8,28.4 50.1,29.9 49.3,31.4 48.6,33.0 46.7,36.8 44.8,40.6 42.9,44.4 41.0,48.3 38.5,53.6 36.6,58.9 36.3,63.5 35.9,68.1 36.5,73.5 37.2,78.8 38.5,82.6 39.8,86.4 42.1,90.3 44.4,94.1 47.0,97.9 49.7,101.7 52.6,105.5 55.5,109.4 58.3,113.2 61.1,117.0 64.0,120.8 66.8,124.6 70.3,129.2 73.8,133.8 76.8,138.4" fill="none" stroke="#1a1f4a" stroke-width=".7" opacity=".35"/><polyline points="55.7,23.5 55.4,24.1 55.2,24.6 54.7,25.6 54.1,26.9 53.4,28.4 52.7,29.9 52.0,31.4 51.3,33.0 49.6,36.8 47.8,40.6 46.0,44.4 44.3,48.3 41.9,53.6 40.2,58.9 39.8,63.5 39.5,68.1 40.1,73.5 40.7,78.8 41.9,82.6 43.1,86.4 45.3,90.3 47.4,94.1 49.9,97.9 52.4,101.7 55.1,105.5 57.8,109.4 60.4,113.2 63.1,117.0 65.7,120.8 68.3,124.6 71.6,129.2 74.9,133.8 77.8,138.4" fill="none" stroke="#1a1f4a" stroke-width=".7" opacity=".35"/><polyline points="60.5,23.5 60.2,24.1 60.0,24.6 59.6,25.6 59.1,26.9 58.5,28.4 57.9,29.9 57.3,31.4 56.7,33.0 55.2,36.8 53.7,40.6 52.2,44.4 50.7,48.3 48.7,53.6 47.2,58.9 46.9,63.5 46.6,68.1 47.1,73.5 47.6,78.8 48.7,82.6 49.7,86.4 51.6,90.3 53.4,94.1 55.5,97.9 57.7,101.7 60.0,105.5 62.4,109.4 64.6,113.2 66.9,117.0 69.2,120.8 71.5,124.6 74.3,129.2 77.1,133.8 79.6,138.4" fill="none" stroke="#1a1f4a" stroke-width=".7" opacity=".35"/><polyline points="67.3,23.5 67.1,24.1 67.0,24.6 66.7,25.6 66.3,26.9 65.8,28.4 65.4,29.9 64.9,31.4 64.4,33.0 63.3,36.8 62.1,40.6 61.0,44.4 59.8,48.3 58.2,53.6 57.1,58.9 56.9,63.5 56.6,68.1 57.0,73.5 57.4,78.8 58.3,82.6 59.1,86.4 60.5,90.3 61.9,94.1 63.6,97.9 65.2,101.7 67.0,105.5 68.8,109.4 70.6,113.2 72.4,117.0 74.1,120.8 75.9,124.6 78.0,129.2 80.2,133.8 82.1,138.4" fill="none" stroke="#1a1f4a" stroke-width=".7" opacity=".35"/><polyline points="75.7,23.5 75.6,24.1 75.5,24.6 75.3,25.6 75.1,26.9 74.8,28.4 74.5,29.9 74.2,31.4 73.9,33.0 73.2,36.8 72.4,40.6 71.7,44.4 71.0,48.3 70.0,53.6 69.3,58.9 69.1,63.5 69.0,68.1 69.3,73.5 69.5,78.8 70.1,82.6 70.6,86.4 71.5,90.3 72.4,94.1 73.5,97.9 74.5,101.7 75.7,105.5 76.8,109.4 77.9,113.2 79.1,117.0 80.2,120.8 81.3,124.6 82.7,129.2 84.1,133.8 85.3,138.4" fill="none" stroke="#1a1f4a" stroke-width=".7" opacity=".35"/><polyline points="85.1,23.5 85.1,24.1 85.1,24.6 85.0,25.6 84.9,26.9 84.8,28.4 84.7,29.9 84.6,31.4 84.5,33.0 84.3,36.8 84.0,40.6 83.7,44.4 83.5,48.3 83.2,53.6 82.9,58.9 82.9,63.5 82.8,68.1 83.0,73.5 83.1,78.8 83.3,82.6 83.5,86.4 83.8,90.3 84.1,94.1 84.5,97.9 84.9,101.7 85.3,105.5 85.7,109.4 86.1,113.2 86.6,117.0 87.0,120.8 87.4,124.6 87.9,129.2 88.4,133.8 88.8,138.4" fill="none" stroke="#1a1f4a" stroke-width=".7" opacity=".35"/><polyline points="94.9,23.5 94.9,24.1 95.0,24.6 95.0,25.6 95.1,26.9 95.2,28.4 95.3,29.9 95.4,31.4 95.5,33.0 95.7,36.8 96.0,40.6 96.2,44.4 96.5,48.3 96.8,53.6 97.1,58.9 97.1,63.5 97.2,68.1 97.2,73.5 97.1,78.8 97.0,82.6 96.8,86.4 96.5,90.3 96.3,94.1 96.0,97.9 95.7,101.7 95.3,105.5 95.0,109.4 94.7,113.2 94.3,117.0 94.0,120.8 93.7,124.6 93.3,129.2 92.9,133.8 92.5,138.4" fill="none" stroke="#1a1f4a" stroke-width=".7" opacity=".35"/><polyline points="104.3,23.5 104.4,24.1 104.5,24.6 104.7,25.6 105.0,26.9 105.3,28.4 105.6,29.9 105.8,31.4 106.1,33.0 106.9,36.8 107.6,40.6 108.3,44.4 109.1,48.3 110.0,53.6 110.8,58.9 110.9,63.5 111.1,68.1 110.9,73.5 110.7,78.8 110.2,82.6 109.7,86.4 108.9,90.3 108.1,94.1 107.1,97.9 106.1,101.7 105.0,105.5 103.9,109.4 102.9,113.2 101.9,117.0 100.8,120.8 99.8,124.6 98.5,129.2 97.2,133.8 96.0,138.4" fill="none" stroke="#1a1f4a" stroke-width=".7" opacity=".35"/><polyline points="112.8,23.5 113.0,24.1 113.1,24.6 113.5,25.6 113.8,26.9 114.3,28.4 114.8,29.9 115.2,31.4 115.7,33.0 116.9,36.8 118.0,40.6 119.2,44.4 120.4,48.3 121.9,53.6 123.1,58.9 123.4,63.5 123.6,68.1 123.3,73.5 122.9,78.8 122.1,82.6 121.4,86.4 120.0,90.3 118.6,94.1 117.1,97.9 115.5,101.7 113.7,105.5 112.0,109.4 110.3,113.2 108.6,117.0 106.9,120.8 105.3,124.6 103.2,129.2 101.1,133.8 99.2,138.4" fill="none" stroke="#1a1f4a" stroke-width=".7" opacity=".35"/><polyline points="119.8,23.5 120.0,24.1 120.2,24.6 120.6,25.6 121.1,26.9 121.7,28.4 122.3,29.9 122.9,31.4 123.6,33.0 125.1,36.8 126.6,40.6 128.1,44.4 129.6,48.3 131.7,53.6 133.2,58.9 133.5,63.5 133.8,68.1 133.4,73.5 132.9,78.8 131.9,82.6 130.9,86.4 129.1,90.3 127.3,94.1 125.2,97.9 123.1,101.7 120.9,105.5 118.6,109.4 116.4,113.2 114.2,117.0 112.0,120.8 109.7,124.6 107.0,129.2 104.2,133.8 101.9,138.4" fill="none" stroke="#1a1f4a" stroke-width=".7" opacity=".35"/><polyline points="124.7,23.5 125.0,24.1 125.2,24.6 125.7,25.6 126.3,26.9 127.0,28.4 127.7,29.9 128.4,31.4 129.1,33.0 130.9,36.8 132.7,40.6 134.5,44.4 136.2,48.3 138.6,53.6 140.4,58.9 140.8,63.5 141.1,68.1 140.6,73.5 140.0,78.8 138.9,82.6 137.7,86.4 135.6,90.3 133.5,94.1 131.1,97.9 128.6,101.7 125.9,105.5 123.3,109.4 120.7,113.2 118.1,117.0 115.5,120.8 112.9,124.6 109.7,129.2 106.5,133.8 103.7,138.4" fill="none" stroke="#1a1f4a" stroke-width=".7" opacity=".35"/><polyline points="127.3,23.5 127.7,24.1 127.9,24.6 128.4,25.6 129.0,26.9 129.8,28.4 130.5,29.9 131.3,31.4 132.1,33.0 134.0,36.8 135.9,40.6 137.8,44.4 139.7,48.3 142.3,53.6 144.2,58.9 144.6,63.5 145.0,68.1 144.4,73.5 143.8,78.8 142.5,82.6 141.3,86.4 139.0,90.3 136.7,94.1 134.1,97.9 131.5,101.7 128.6,105.5 125.8,109.4 123.0,113.2 120.2,117.0 117.4,120.8 114.6,124.6 111.2,129.2 107.7,133.8 104.7,138.4" fill="none" stroke="#1a1f4a" stroke-width=".7" opacity=".35"/><polyline points="52.9,23.5 52.6,24.1 52.4,24.6 51.9,25.6 51.3,26.9 50.5,28.4 49.8,29.9 49.0,31.4 48.2,33.0 46.4,36.8 44.5,40.6 42.6,44.4 40.7,48.3 38.1,53.6 36.2,58.9 35.9,63.5 35.5,68.1 36.1,73.5 36.8,78.8 38.1,82.6 39.4,86.4 41.7,90.3 44.0,94.1 46.7,97.9 49.4,101.7 52.3,105.5 55.2,109.4 58.1,113.2 60.9,117.0 63.8,120.8 66.6,124.6 70.1,129.2 73.7,133.8 76.7,138.4" fill="none" stroke="#fff" stroke-width="1.2" opacity=".08"/><polyline points="54.3,23.5 54.0,24.1 53.8,24.6 53.3,25.6 52.7,26.9 52.0,28.4 51.2,29.9 50.5,31.4 49.8,33.0 48.0,36.8 46.1,40.6 44.3,44.4 42.5,48.3 40.0,53.6 38.2,58.9 37.9,63.5 37.5,68.1 38.1,73.5 38.7,78.8 40.0,82.6 41.3,86.4 43.5,90.3 45.7,94.1 48.3,97.9 50.9,101.7 53.7,105.5 56.5,109.4 59.3,113.2 62.0,117.0 64.7,120.8 67.5,124.6 70.9,129.2 74.3,133.8 77.2,138.4" fill="none" stroke="#fff" stroke-width="1.2" opacity=".08"/><polyline points="58.1,23.5 57.9,24.1 57.7,24.6 57.2,25.6 56.7,26.9 56.0,28.4 55.4,29.9 54.7,31.4 54.1,33.0 52.4,36.8 50.8,40.6 49.2,44.4 47.6,48.3 45.4,53.6 43.7,58.9 43.4,63.5 43.1,68.1 43.7,73.5 44.2,78.8 45.3,82.6 46.5,86.4 48.5,90.3 50.5,94.1 52.8,97.9 55.1,101.7 57.6,105.5 60.1,109.4 62.6,113.2 65.0,117.0 67.5,120.8 69.9,124.6 73.0,129.2 76.0,133.8 78.7,138.4" fill="none" stroke="#fff" stroke-width="1.2" opacity=".08"/><polyline points="64.1,23.5 63.9,24.1 63.8,24.6 63.4,25.6 63.0,26.9 62.4,28.4 61.9,29.9 61.4,31.4 60.8,33.0 59.5,36.8 58.2,40.6 56.9,44.4 55.5,48.3 53.8,53.6 52.5,58.9 52.2,63.5 52.0,68.1 52.4,73.5 52.9,78.8 53.8,82.6 54.7,86.4 56.3,90.3 57.9,94.1 59.8,97.9 61.7,101.7 63.8,105.5 65.8,109.4 67.8,113.2 69.8,117.0 71.8,120.8 73.8,124.6 76.3,129.2 78.8,133.8 80.9,138.4" fill="none" stroke="#fff" stroke-width="1.2" opacity=".08"/><polyline points="71.9,23.5 71.8,24.1 71.7,24.6 71.4,25.6 71.1,26.9 70.7,28.4 70.4,29.9 70.0,31.4 69.6,33.0 68.7,36.8 67.8,40.6 66.8,44.4 65.9,48.3 64.7,53.6 63.8,58.9 63.6,63.5 63.4,68.1 63.7,73.5 64.1,78.8 64.7,82.6 65.4,86.4 66.5,90.3 67.7,94.1 69.0,97.9 70.3,101.7 71.8,105.5 73.2,109.4 74.6,113.2 76.0,117.0 77.4,120.8 78.8,124.6 80.6,129.2 82.3,133.8 83.9,138.4" fill="none" stroke="#fff" stroke-width="1.2" opacity=".08"/><polyline points="81.0,23.5 80.9,24.1 80.8,24.6 80.7,25.6 80.6,26.9 80.4,28.4 80.2,29.9 80.0,31.4 79.8,33.0 79.4,36.8 78.9,40.6 78.4,44.4 78.0,48.3 77.3,53.6 76.9,58.9 76.8,63.5 76.7,68.1 76.9,73.5 77.1,78.8 77.4,82.6 77.8,86.4 78.4,90.3 78.9,94.1 79.6,97.9 80.3,101.7 81.1,105.5 81.8,109.4 82.5,113.2 83.2,117.0 84.0,120.8 84.7,124.6 85.6,129.2 86.5,133.8 87.3,138.4" fill="none" stroke="#fff" stroke-width="1.2" opacity=".08"/><polyline points="90.7,23.5 90.7,24.1 90.7,24.6 90.7,25.6 90.7,26.9 90.7,28.4 90.7,29.9 90.7,31.4 90.7,33.0 90.8,36.8 90.8,40.6 90.8,44.4 90.9,48.3 90.9,53.6 90.9,58.9 91.0,63.5 91.0,68.1 91.0,73.5 91.0,78.8 91.0,82.6 91.0,86.4 91.0,90.3 91.0,94.1 91.0,97.9 91.0,101.7 91.0,105.5 91.0,109.4 91.0,113.2 91.0,117.0 90.9,120.8 90.9,124.6 90.9,129.2 90.9,133.8 90.9,138.4" fill="none" stroke="#fff" stroke-width="1.2" opacity=".08"/><polyline points="100.3,23.5 100.4,24.1 100.5,24.6 100.6,25.6 100.8,26.9 101.0,28.4 101.2,29.9 101.4,31.4 101.6,33.0 102.1,36.8 102.7,40.6 103.2,44.4 103.7,48.3 104.4,53.6 105.0,58.9 105.1,63.5 105.2,68.1 105.1,73.5 104.9,78.8 104.6,82.6 104.3,86.4 103.7,90.3 103.1,94.1 102.4,97.9 101.7,101.7 100.9,105.5 100.1,109.4 99.4,113.2 98.7,117.0 97.9,120.8 97.2,124.6 96.3,129.2 95.3,133.8 94.5,138.4" fill="none" stroke="#fff" stroke-width="1.2" opacity=".08"/><polyline points="109.3,23.5 109.5,24.1 109.6,24.6 109.9,25.6 110.2,26.9 110.6,28.4 111.0,29.9 111.3,31.4 111.7,33.0 112.7,36.8 113.7,40.6 114.7,44.4 115.7,48.3 117.0,53.6 118.0,58.9 118.2,63.5 118.4,68.1 118.1,73.5 117.8,78.8 117.2,82.6 116.6,86.4 115.4,90.3 114.3,94.1 112.9,97.9 111.6,101.7 110.1,105.5 108.7,109.4 107.2,113.2 105.8,117.0 104.4,120.8 103.0,124.6 101.2,129.2 99.4,133.8 97.9,138.4" fill="none" stroke="#fff" stroke-width="1.2" opacity=".08"/><polyline points="117.0,23.5 117.2,24.1 117.4,24.6 117.8,25.6 118.2,26.9 118.8,28.4 119.3,29.9 119.9,31.4 120.4,33.0 121.8,36.8 123.2,40.6 124.5,44.4 125.9,48.3 127.8,53.6 129.1,58.9 129.4,63.5 129.7,68.1 129.3,73.5 128.9,78.8 128.0,82.6 127.1,86.4 125.5,90.3 123.8,94.1 121.9,97.9 120.1,101.7 118.0,105.5 115.9,109.4 113.9,113.2 111.9,117.0 109.9,120.8 107.9,124.6 105.5,129.2 103.0,133.8 100.8,138.4" fill="none" stroke="#fff" stroke-width="1.2" opacity=".08"/><polyline points="122.9,23.5 123.1,24.1 123.3,24.6 123.8,25.6 124.3,26.9 125.0,28.4 125.7,29.9 126.4,31.4 127.0,33.0 128.7,36.8 130.4,40.6 132.1,44.4 133.7,48.3 136.0,53.6 137.7,58.9 138.0,63.5 138.4,68.1 137.9,73.5 137.3,78.8 136.2,82.6 135.1,86.4 133.1,90.3 131.2,94.1 128.8,97.9 126.5,101.7 124.0,105.5 121.5,109.4 119.1,113.2 116.6,117.0 114.2,120.8 111.7,124.6 108.7,129.2 105.7,133.8 103.0,138.4" fill="none" stroke="#fff" stroke-width="1.2" opacity=".08"/><polyline points="126.5,23.5 126.8,24.1 127.0,24.6 127.6,25.6 128.2,26.9 128.9,28.4 129.6,29.9 130.4,31.4 131.1,33.0 133.0,36.8 134.9,40.6 136.7,44.4 138.6,48.3 141.1,53.6 143.0,58.9 143.4,63.5 143.7,68.1 143.2,73.5 142.6,78.8 141.4,82.6 140.1,86.4 137.9,90.3 135.7,94.1 133.1,97.9 130.6,101.7 127.8,105.5 125.0,109.4 122.3,113.2 119.5,117.0 116.8,120.8 114.1,124.6 110.7,129.2 107.3,133.8 104.4,138.4" fill="none" stroke="#fff" stroke-width="1.2" opacity=".08"/><polyline points="90.3,23.5 96.4,24.1 101.0,24.6 105.7,25.6 111.0,26.9 115.2,28.4 119.4,29.9 122.8,31.4 126.3,33.0 130.9,36.8 135.5,40.6 138.1,44.4 140.8,48.3 142.8,53.6 144.7,58.9 145.1,63.5 145.5,68.1 144.9,73.5 144.3,78.8 143.0,82.6 141.8,86.4 139.5,90.3 137.2,94.1 134.5,97.9 131.9,101.7 129.0,105.5 126.1,109.4 123.3,113.2 120.5,117.0 117.7,120.8 114.9,124.6 111.4,129.2 107.9,133.8 104.8,138.4" fill="none" stroke="#fff" stroke-width="1.2" opacity=".08"/><polygon points="51.3,27.2 50.7,28.4 50.0,29.9 49.2,31.4 48.5,33.0 46.6,36.8 44.7,40.6 42.8,44.4 40.9,48.3 38.4,53.6 36.5,58.9 36.2,63.5 36.1,64.4 39.8,64.4 39.8,63.5 40.2,58.9 41.9,53.6 44.3,48.3 46.0,44.4 47.8,40.6 49.6,36.8 51.3,33.0 52.0,31.4 52.7,29.9 53.4,28.4 54.0,27.2" fill="#e6cc66" opacity="1"/><ellipse cx="38.0" cy="64.1" rx="1.8" ry="4.0" fill="#e6cc66"/><ellipse cx="52.6" cy="27.2" rx="1.3" ry="4.0" fill="#e6cc66"/><polygon points="44.1,93.7 44.3,94.1 47.0,97.9 49.7,101.7 52.6,105.5 55.5,109.4 58.3,113.2 61.1,117.0 63.9,120.8 66.8,124.6 70.3,129.2 73.8,133.8 76.8,138.4 77.7,138.4 74.8,133.8 71.5,129.2 68.3,124.6 65.6,120.8 63.0,117.0 60.3,113.2 57.7,109.4 55.0,105.5 52.2,101.7 49.7,97.9 47.2,94.1 47.0,93.7" fill="#e6cc66" opacity="1"/><ellipse cx="45.8" cy="94.0" rx="1.5" ry="4.0" fill="#e6cc66"/><polygon points="58.6,27.2 58.1,28.4 57.5,29.9 56.9,31.4 56.3,33.0 54.8,36.8 53.2,40.6 51.7,44.4 50.2,48.3 48.1,53.6 46.6,58.9 57.1,58.9 58.2,53.6 59.8,48.3 61.0,44.4 62.1,40.6 63.3,36.8 64.4,33.0 64.9,31.4 65.4,29.9 65.8,28.4 66.2,27.2" fill="#efd24a" opacity="1"/><ellipse cx="51.9" cy="58.6" rx="5.2" ry="4.0" fill="#efd24a"/><ellipse cx="62.4" cy="27.2" rx="3.6" ry="4.0" fill="#efd24a"/><polygon points="51.3,90.2 51.3,90.3 53.2,94.1 55.4,97.9 57.5,101.7 59.9,105.5 62.2,109.4 64.5,113.2 66.8,117.0 69.1,120.8 71.4,124.6 74.2,129.2 77.0,133.8 79.5,138.4 82.0,138.4 80.1,133.8 77.9,129.2 75.7,124.6 73.9,120.8 72.1,117.0 70.3,113.2 68.6,109.4 66.7,105.5 64.9,101.7 63.2,97.9 61.5,94.1 60.1,90.3 60.1,90.2" fill="#efd24a" opacity="1"/><ellipse cx="55.8" cy="90.5" rx="4.4" ry="4.0" fill="#efd24a"/><polygon points="74.4,27.2 74.1,28.4 73.8,29.9 73.5,31.4 73.2,33.0 72.5,36.8 71.7,40.6 70.9,44.4 70.2,48.3 69.2,53.2 83.2,53.2 83.5,48.3 83.7,44.4 84.0,40.6 84.3,36.8 84.5,33.0 84.6,31.4 84.7,29.9 84.8,28.4 84.9,27.2" fill="#efd24a" opacity="1"/><ellipse cx="76.2" cy="52.9" rx="7.0" ry="4.0" fill="#efd24a"/><ellipse cx="79.6" cy="27.2" rx="5.0" ry="4.0" fill="#efd24a"/><polygon points="70.3,86.5 71.2,90.3 72.1,94.1 73.2,97.9 74.3,101.7 75.4,105.5 76.6,109.4 77.7,113.2 78.9,117.0 80.0,120.8 81.1,124.6 82.6,129.2 84.0,133.8 85.2,138.4 88.7,138.4 88.2,133.8 87.7,129.2 87.1,124.6 86.7,120.8 86.2,117.0 85.8,113.2 85.4,109.4 84.9,105.5 84.5,101.7 84.1,97.9 83.6,94.1 83.3,90.3 82.9,86.5" fill="#efd24a" opacity="1"/><ellipse cx="76.6" cy="86.8" rx="6.3" ry="4.0" fill="#efd24a"/><polygon points="94.4,27.2 94.5,28.4 94.6,29.9 94.7,31.4 94.8,33.0 95.0,36.8 95.2,40.6 95.4,44.4 95.6,48.3 95.9,53.0 110.0,53.0 109.1,48.3 108.3,44.4 107.6,40.6 106.9,36.8 106.1,33.0 105.8,31.4 105.6,29.9 105.3,28.4 105.0,27.2" fill="#f0d040" opacity="1"/><ellipse cx="102.9" cy="52.7" rx="7.0" ry="4.0" fill="#f0d040"/><ellipse cx="99.7" cy="27.2" rx="5.1" ry="4.0" fill="#f0d040"/><polygon points="96.5,86.3 96.5,86.4 96.2,90.3 96.0,94.1 95.7,97.9 95.4,101.7 95.1,105.5 94.7,109.4 94.4,113.2 94.1,117.0 93.8,120.8 93.5,124.6 93.1,129.2 92.7,133.8 92.4,138.4 95.9,138.4 97.0,133.8 98.3,129.2 99.5,124.6 100.6,120.8 101.6,117.0 102.6,113.2 103.6,109.4 104.6,105.5 105.7,101.7 106.6,97.9 107.6,94.1 108.4,90.3 109.2,86.4 109.3,86.3" fill="#f0d040" opacity="1"/><ellipse cx="102.8" cy="86.6" rx="6.4" ry="4.0" fill="#f0d040"/><polygon points="113.4,27.2 113.8,28.4 114.2,29.9 114.7,31.4 115.1,33.0 116.3,36.8 117.4,40.6 118.5,44.4 119.7,48.3 121.2,53.6 122.2,58.5 133.1,58.5 131.7,53.6 129.6,48.3 128.1,44.4 126.6,40.6 125.1,36.8 123.6,33.0 122.9,31.4 122.3,29.9 121.7,28.4 121.2,27.2" fill="#f0d040" opacity="1"/><ellipse cx="127.6" cy="58.2" rx="5.4" ry="4.0" fill="#f0d040"/><ellipse cx="117.3" cy="27.2" rx="3.8" ry="4.0" fill="#f0d040"/><polygon points="119.9,89.9 119.7,90.3 118.4,94.1 116.8,97.9 115.2,101.7 113.5,105.5 111.8,109.4 110.1,113.2 108.5,117.0 106.8,120.8 105.1,124.6 103.0,129.2 101.0,133.8 99.2,138.4 101.8,138.4 104.1,133.8 106.9,129.2 109.6,124.6 111.8,120.8 114.0,117.0 116.2,113.2 118.4,109.4 120.6,105.5 122.9,101.7 124.9,97.9 127.0,94.1 128.8,90.3 129.0,89.9" fill="#f0d040" opacity="1"/><ellipse cx="124.3" cy="90.2" rx="4.5" ry="4.0" fill="#f0d040"/><polygon points="126.2,27.2 126.7,28.4 127.4,29.9 128.1,31.4 128.8,33.0 130.6,36.8 132.4,40.6 134.1,44.4 135.9,48.3 138.2,53.6 140.0,58.9 140.4,63.5 140.4,64.2 144.6,64.2 144.6,63.5 144.2,58.9 142.3,53.6 139.7,48.3 137.8,44.4 135.9,40.6 134.0,36.8 132.1,33.0 131.3,31.4 130.5,29.9 129.8,28.4 129.2,27.2" fill="#f0d040" opacity="1"/><ellipse cx="142.5" cy="63.9" rx="2.1" ry="4.0" fill="#f0d040"/><ellipse cx="127.7" cy="27.2" rx="1.4" ry="4.0" fill="#f0d040"/><polygon points="133.6,93.6 133.4,94.1 130.9,97.9 128.5,101.7 125.8,105.5 123.2,109.4 120.6,113.2 118.0,117.0 115.5,120.8 112.9,124.6 109.7,129.2 106.5,133.8 103.7,138.4 104.7,138.4 107.7,133.8 111.1,129.2 114.6,124.6 117.4,120.8 120.2,117.0 122.9,113.2 125.7,109.4 128.6,105.5 131.4,101.7 134.0,97.9 136.7,94.1 137.0,93.6" fill="#f0d040" opacity="1"/><ellipse cx="135.1" cy="93.9" rx="1.7" ry="4.0" fill="#f0d040"/></g><polygon points="90.3,23.5 84.2,24.1 79.6,24.6 75.0,25.6 69.7,26.9 65.5,28.4 61.3,29.9 57.9,31.4 54.5,33.0 49.9,36.8 45.3,40.6 42.7,44.4 40.0,48.3 38.1,53.6 36.2,58.9 35.9,63.5 35.5,68.1 36.1,73.5 36.8,78.8 38.1,82.6 39.4,86.4 41.7,90.3 44.0,94.1 46.7,97.9 49.4,101.7 52.3,105.5 55.2,109.4 58.1,113.2 60.9,117.0 63.8,120.8 66.6,124.6 70.1,129.2 73.7,133.8 76.7,138.4 104.8,138.4 107.9,133.8 111.4,129.2 114.9,124.6 117.7,120.8 120.5,117.0 123.3,113.2 126.1,109.4 129.0,105.5 131.9,101.7 134.5,97.9 137.2,94.1 139.5,90.3 141.8,86.4 143.0,82.6 144.3,78.8 144.9,73.5 145.5,68.1 145.1,63.5 144.7,58.9 142.8,53.6 140.8,48.3 138.1,44.4 135.5,40.6 130.9,36.8 126.3,33.0 122.8,31.4 119.4,29.9 115.2,28.4 111.0,26.9 105.7,25.6 101.0,24.6 96.4,24.1 90.3,23.5" fill="url(#p2sh)"/></g><polygon points="76.6,138.4 104.8,138.4 99.8,147.6 96.9,154.0 94.4,154.7 92.0,149.1 83.5,146.8" fill="#f0401c" filter="url(#b3)"/><polygon points="76.6,138.4 86.5,138.7 89.6,147.2 83.5,146.8" fill="#d8300f" filter="url(#b3)"/><polygon points="0.0,158.0 56.8,156.7 85.5,155.1 105.4,153.1 127.5,150.3 145.2,147.8 158.5,150.3 167.3,148.3 185.0,150.3 193.8,147.8 211.5,150.9 222.1,152.3 222.1,213.7 0.0,213.7" fill="#978a80" filter="url(#b3)"/><polygon points="0.0,160.0 56.8,158.0 105.4,155.1 145.2,154.0 222.1,155.1 222.1,167.3 0.0,169.5" fill="#c7a47a" filter="url(#b8)" opacity=".9"/><polygon points="0.0,167.3 101.0,164.0 158.5,167.3 145.2,213.7 0.0,213.7" fill="#8f8a88" filter="url(#b8)"/><polygon points="222.1,157.3 189.4,160.7 171.7,169.5 145.2,187.2 123.1,202.7 105.4,210.4 105.4,213.7 222.1,213.7" fill="url(#p2gold)" filter="url(#b3)"/><polygon points="222.1,176.1 202.7,185.0 185.0,204.9 180.6,213.7 222.1,213.7" fill="#ede2d6" filter="url(#b8)" opacity=".9"/><polygon points="114.3,180.6 127.5,171.7 145.2,162.9 154.0,160.7 167.3,167.3 165.1,173.9 145.2,182.8 131.9,191.6 109.8,209.3 105.4,210.4 123.1,191.6" fill="#e6e2de" filter="url(#b3)"/><polygon points="176.1,169.5 189.4,167.3 196.0,170.6 185.0,172.8" fill="#e4ded8" filter="url(#b3)"/><rect y="160" width="130" height="55" filter="url(#p2n)" opacity=".85"/><rect y="160" width="140" height="55" filter="url(#p2d)" opacity=".9"/><polygon points="0.0,169.5 56.8,167.3 114.3,169.5 131.9,182.8 101.0,209.3 0.0,213.7" fill="#b08a5c" filter="url(#b8)" opacity=".28"/><polygon points="0.0,176.1 48.0,173.9 63.4,191.6 34.7,204.9 0.0,202.7" fill="#4a4c50" filter="url(#b8)" opacity=".35"/><rect x="85.7" y="157.0" width="9.5" height="6" rx="1" fill="#9a6f46" filter="url(#b3)"/><rect x="85.7" y="157.0" width="9.5" height="1.6" fill="#5a4030" filter="url(#b3)"/><polygon points="42.4,173.9 49.1,198.2 35.8,198.2" fill="#8e8a88" filter="url(#b3)"/><polygon points="42.4,173.9 43.8,198.2 35.8,198.2" fill="#d8d2cc" filter="url(#b3)"/><polygon points="75.6,171.7 82.2,193.8 69.0,193.8" fill="#8e8a88" filter="url(#b3)"/><polygon points="75.6,171.7 76.9,193.8 69.0,193.8" fill="#d8d2cc" filter="url(#b3)"/><polygon points="85.5,187.2 93.3,211.5 77.8,211.5" fill="#8e8a88" filter="url(#b3)"/><polygon points="85.5,187.2 87.1,211.5 77.8,211.5" fill="#d8d2cc" filter="url(#b3)"/><polygon points="61.2,191.6 69.0,213.7 53.5,213.7" fill="#8e8a88" filter="url(#b3)"/><polygon points="61.2,191.6 62.8,213.7 53.5,213.7" fill="#d8d2cc" filter="url(#b3)"/><polygon points="131.9,176.1 137.5,191.6 126.4,191.6" fill="#8e8a88" filter="url(#b3)"/><polygon points="131.9,176.1 133.0,191.6 126.4,191.6" fill="#d8d2cc" filter="url(#b3)"/><polygon points="113.1,187.2 119.8,202.7 106.5,202.7" fill="#8e8a88" filter="url(#b3)"/><polygon points="113.1,187.2 114.5,202.7 106.5,202.7" fill="#d8d2cc" filter="url(#b3)"/><polygon points="7.1,200.4 12.6,213.7 1.5,213.7" fill="#8e8a88" filter="url(#b3)"/><polygon points="7.1,200.4 8.2,213.7 1.5,213.7" fill="#d8d2cc" filter="url(#b3)"/><polygon points="36.9,200.4 41.3,213.7 32.5,213.7" fill="#8e8a88" filter="url(#b3)"/><polygon points="36.9,200.4 37.8,213.7 32.5,213.7" fill="#d8d2cc" filter="url(#b3)"/><polygon points="105.4,167.3 108.7,178.3 102.1,178.3" fill="#8e8a88" filter="url(#b3)"/><polygon points="105.4,167.3 106.1,178.3 102.1,178.3" fill="#d8d2cc" filter="url(#b3)"/><polygon points="92.2,169.5 95.2,179.4 89.1,179.4" fill="#8e8a88" filter="url(#b3)"/><polygon points="92.2,169.5 92.8,179.4 89.1,179.4" fill="#d8d2cc" filter="url(#b3)"/><polygon points="171.7,160.7 174.8,170.6 168.6,170.6" fill="#8e8a88" filter="url(#b3)"/><polygon points="171.7,160.7 172.3,170.6 168.6,170.6" fill="#d8d2cc" filter="url(#b3)"/><ellipse cx="176.8" cy="90.6" rx="4.2" ry="5.3" fill="#e6e2de" filter="url(#b3)"/><polygon points="173.0,92.6 180.6,92.6 177.9,97.5 175.7,97.5" fill="#a89488" filter="url(#b3)"/><polygon points="148.5,213.7 149.2,190.5 152.9,186.1 159.6,186.7 162.9,191.6 163.3,213.7" fill="#3c9cba" filter="url(#b3)"/><polygon points="154.5,187.2 157.6,187.2 158.5,213.7 155.1,213.7" fill="#2a7e9c" filter="url(#b3)" opacity=".8"/><ellipse cx="154.5" cy="184.5" rx="4.6" ry="6.6" fill="#8a4424" filter="url(#b3)"/><polygon points="164.2,213.7 165.1,188.3 169.5,183.9 178.3,184.5 182.3,191.6 182.3,213.7" fill="#7c3c24" filter="url(#b3)"/><polygon points="170.6,185.0 175.0,185.0 174.4,213.7 171.3,213.7" fill="#5a2414" filter="url(#b3)" opacity=".7"/><ellipse cx="173.0" cy="181.0" rx="6.0" ry="7.5" fill="#66281a" filter="url(#b3)"/></g></svg><svg style="left:1258.2px;top:794.9px" width="320.4" height="192" viewBox="0 0 320.4 192"><defs>
<linearGradient id="p3l" x1="0" y1="0" x2="1" y2="0"><stop offset="0" stop-color="#3a2018"/><stop offset="1" stop-color="#1c0f0c"/></linearGradient>
<linearGradient id="p3r" x1="0" y1="0" x2="1" y2="0"><stop offset="0" stop-color="#160d0a"/><stop offset=".45" stop-color="#2c1c14"/><stop offset="1" stop-color="#42291c"/></linearGradient>
<radialGradient id="p3glow"><stop offset="0" stop-color="#ffa060" stop-opacity=".32"/><stop offset="1" stop-color="#ff8040" stop-opacity="0"/></radialGradient>
<filter id="b5"><feGaussianBlur stdDeviation=".6"/></filter>
<filter id="b20"><feGaussianBlur stdDeviation="3"/></filter>
<clipPath id="p3c"><rect width="320.4" height="192"/></clipPath>
<filter id="p3b"><feGaussianBlur stdDeviation=".42"/></filter></defs><g clip-path="url(#p3c)"><g filter="url(#p3b)"><rect width="320.4" height="192" fill="#0b0908"/><polygon points="0.0,0.0 86.3,0.0 86.3,74.2 104.3,78.2 130.4,76.2 148.4,84.3 152.5,142.4 152.5,190.6 0.0,190.6" fill="url(#p3l)" /><polygon points="320.4,0.0 219.7,0.0 216.6,30.1 210.6,56.2 200.6,76.2 184.6,94.3 173.5,134.4 172.5,190.6 320.4,190.6" fill="url(#p3r)" /><polygon points="272.8,0.0 310.9,0.0 310.9,150.5 276.8,150.5" fill="#5e4230" opacity=".9" filter="url(#b5)"/><polygon points="72.2,2.0 84.3,2.0 82.2,166.5 71.2,162.5" fill="#5c3a28" opacity=".85" filter="url(#b5)"/><polygon points="35.1,2.0 72.2,2.0 71.2,98.3 35.1,76.2" fill="#1f1512" filter="url(#b5)"/><ellipse cx="52.2" cy="182.5" rx="66.2" ry="24.1" fill="url(#p3glow)" /><ellipse cx="262.8" cy="182.5" rx="76.2" ry="26.1" fill="url(#p3glow)" /><ellipse cx="158.5" cy="186.6" rx="60.2" ry="18.1" fill="url(#p3glow)" /><rect x="1.0" y="0.0" width="33.5" height="8.4" fill="#e6dde6" filter="url(#b3)"/><rect x="1.0" y="10.0" width="33.5" height="13.2" fill="#141010" filter="url(#b3)"/><rect x="1.0" y="24.1" width="31.1" height="86.3" fill="#d2201c" filter="url(#b3)"/><rect x="1.0" y="110.3" width="28.1" height="18.1" fill="#181212" filter="url(#b3)"/><rect x="36.1" y="27.1" width="15.0" height="17.5" fill="#e6e2bc" filter="url(#b3)"/><rect x="19.1" y="40.1" width="11.4" height="15.0" fill="#d8d0a4" filter="url(#b3)"/><rect x="44.1" y="42.1" width="12.0" height="12.0" fill="#8a8458" filter="url(#b3)"/><rect x="53.2" y="99.3" width="9.4" height="40.1" fill="#b01f1c" filter="url(#b3)"/><rect x="62.6" y="104.3" width="9.2" height="34.1" fill="#8e1c18" filter="url(#b3)"/><rect x="87.3" y="16.0" width="14.6" height="14.0" fill="#6e1a1c" filter="url(#b3)"/><rect x="87.9" y="31.1" width="14.0" height="36.7" fill="#f1da92" filter="url(#b3)"/><rect x="88.3" y="68.6" width="13.0" height="8.0" fill="#7d93c8" filter="url(#b3)"/><rect x="86.7" y="77.6" width="14.6" height="41.7" fill="#e9e1e0" filter="url(#b3)"/><rect x="86.3" y="120.0" width="15.0" height="4.8" fill="#d23030" filter="url(#b3)"/><rect x="85.9" y="124.8" width="14.4" height="47.3" fill="#ea4c1c" filter="url(#b3)"/><rect x="105.3" y="28.1" width="7.0" height="48.5" fill="#c9929a" filter="url(#b3)"/><rect x="102.7" y="82.2" width="10.6" height="13.0" fill="#c9bdc0" filter="url(#b3)"/><rect x="102.7" y="96.3" width="10.6" height="14.0" fill="#d8407c" filter="url(#b3)"/><rect x="103.3" y="111.3" width="10.0" height="11.0" fill="#e6dce0" filter="url(#b3)"/><rect x="103.3" y="123.4" width="10.0" height="13.0" fill="#c83c84" filter="url(#b3)"/><rect x="118.8" y="90.3" width="13.6" height="41.1" fill="#c9c1d2" filter="url(#b3)"/><rect x="130.4" y="74.2" width="17.1" height="17.1" fill="#2a2222" filter="url(#b3)"/><rect x="130.8" y="91.3" width="16.6" height="58.2" fill="#1a1112" filter="url(#b3)"/><rect x="134.8" y="110.3" width="3.2" height="58.2" fill="#c8c0b4" filter="url(#b3)"/><rect x="120.4" y="128.4" width="5.6" height="32.1" fill="#e05a24" filter="url(#b3)"/><rect x="112.3" y="150.5" width="8.0" height="10.0" fill="#e8a040" filter="url(#b3)"/><rect x="126.8" y="148.4" width="8.6" height="16.0" fill="#3a78d8" filter="url(#b3)"/><rect x="138.4" y="149.4" width="9.0" height="9.0" fill="#d02828" filter="url(#b3)"/><rect x="138.0" y="159.5" width="9.4" height="11.0" fill="#d8d0e0" filter="url(#b3)"/><rect x="139.4" y="170.5" width="9.0" height="8.0" fill="#3a60c0" filter="url(#b3)"/><rect x="150.5" y="158.9" width="14.0" height="11.6" fill="#c9c4b8" filter="url(#b3)"/><rect x="135.4" y="178.5" width="15.0" height="8.0" fill="#e8c040" filter="url(#b3)"/><rect x="100.3" y="137.4" width="12.0" height="13.0" fill="#d8d8c8" filter="url(#b3)"/><rect x="101.3" y="152.5" width="11.0" height="12.0" fill="#e8e0d0" filter="url(#b3)"/><rect x="96.3" y="177.5" width="8.0" height="9.4" fill="#e84040" filter="url(#b3)"/><rect x="112.3" y="164.5" width="12.0" height="22.5" fill="#c8a880" filter="url(#b3)"/><rect x="124.4" y="166.5" width="12.0" height="20.5" fill="#d8c8e0" filter="url(#b3)"/><rect x="158.5" y="139.4" width="12.4" height="6.2" fill="#d08c30" filter="url(#b3)"/><rect x="172.5" y="133.4" width="5.0" height="9.0" fill="#4a90d8" filter="url(#b3)"/><rect x="178.5" y="94.3" width="7.0" height="32.5" fill="#2a52cc" filter="url(#b3)"/><rect x="188.6" y="84.3" width="9.2" height="26.5" fill="#c87c3c" filter="url(#b3)"/><rect x="173.5" y="143.4" width="8.0" height="43.5" fill="#c8c8b8" filter="url(#b3)"/><rect x="182.5" y="118.4" width="7.0" height="16.0" fill="#d8d4c4" filter="url(#b3)"/><rect x="189.6" y="112.3" width="9.0" height="22.1" fill="#b8b4a0" filter="url(#b3)"/><rect x="184.6" y="136.4" width="8.0" height="14.0" fill="#d0c8a8" filter="url(#b3)"/><rect x="194.6" y="148.4" width="8.0" height="30.1" fill="#5a3ca8" filter="url(#b3)"/><rect x="189.6" y="150.5" width="5.0" height="26.1" fill="#c03038" filter="url(#b3)"/><rect x="202.6" y="154.5" width="13.0" height="28.1" fill="#8a6a3a" filter="url(#b3)"/><rect x="200.6" y="110.3" width="8.0" height="32.1" fill="#b8b0a8" filter="url(#b3)"/><rect x="210.6" y="99.3" width="11.0" height="9.0" fill="#e6e6ee" filter="url(#b3)"/><rect x="210.6" y="109.3" width="11.0" height="6.0" fill="#5a8ad8" filter="url(#b3)"/><rect x="211.0" y="116.3" width="10.6" height="7.0" fill="#e0dcd8" filter="url(#b3)"/><rect x="211.0" y="124.4" width="11.0" height="8.0" fill="#d8d4cc" filter="url(#b3)"/><rect x="211.6" y="133.4" width="10.6" height="7.4" fill="#d03028" filter="url(#b3)"/><rect x="211.6" y="141.6" width="11.0" height="7.8" fill="#d8d8e8" filter="url(#b3)"/><rect x="220.7" y="1.0" width="18.1" height="17.5" fill="#dfe3ee" filter="url(#b3)"/><rect x="221.1" y="20.1" width="18.9" height="24.5" fill="#a9b9ea" filter="url(#b3)"/><rect x="222.7" y="46.1" width="18.5" height="24.5" fill="#141012" filter="url(#b3)"/><rect x="222.7" y="72.2" width="19.3" height="25.5" fill="#ead9a0" filter="url(#b3)"/><rect x="222.7" y="99.3" width="20.5" height="25.5" fill="#161012" filter="url(#b3)"/><rect x="223.9" y="126.4" width="20.1" height="26.5" fill="#e4e4e0" filter="url(#b3)"/><rect x="242.7" y="1.0" width="28.5" height="17.5" fill="#7c2c12" filter="url(#b3)"/><rect x="243.1" y="20.1" width="28.1" height="20.1" fill="#1a1210" filter="url(#b3)"/><rect x="243.7" y="42.1" width="29.5" height="42.5" fill="#e8ece6" filter="url(#b3)"/><rect x="244.7" y="87.1" width="29.1" height="4.4" fill="#38a060" filter="url(#b3)"/><rect x="245.1" y="91.5" width="30.9" height="39.3" fill="#c63a20" filter="url(#b3)"/><rect x="271.8" y="37.1" width="12.2" height="13.4" fill="#e8e4c0" filter="url(#b3)"/><rect x="280.8" y="26.1" width="10.4" height="14.4" fill="#dcd6ac" filter="url(#b3)"/><rect x="297.9" y="39.1" width="13.4" height="15.4" fill="#eeeacc" filter="url(#b3)"/><rect x="311.3" y="0.0" width="9.0" height="68.6" fill="#e0262a" filter="url(#b3)"/><rect x="293.9" y="71.2" width="25.5" height="45.5" fill="#b8923c" filter="url(#b3)"/><rect x="290.9" y="156.5" width="29.5" height="30.5" fill="#e43c1c" filter="url(#b3)"/><rect x="245.1" y="154.9" width="13.6" height="32.1" fill="#e8d4b4" filter="url(#b3)"/><rect x="259.8" y="154.5" width="17.1" height="32.5" fill="#e6dcc8" filter="url(#b3)"/><rect x="224.7" y="162.5" width="13.0" height="24.5" fill="#1a1212" filter="url(#b3)"/><rect x="238.7" y="166.5" width="6.4" height="20.5" fill="#c8a880" filter="url(#b3)"/><rect x="260.8" y="142.4" width="12.0" height="12.4" fill="#a87830" filter="url(#b3)"/><rect x="276.8" y="138.4" width="22.1" height="12.0" fill="#2a1e1a" filter="url(#b3)"/><rect x="32.1" y="169.5" width="17.3" height="8.4" fill="#2c8a50" filter="url(#b3)"/><rect x="35.1" y="130.4" width="21.1" height="26.1" fill="#a8837a" filter="url(#b3)"/><rect x="4.0" y="142.4" width="28.1" height="24.1" fill="#5a2418" filter="url(#b3)"/><rect x="28.1" y="178.5" width="24.1" height="8.4" fill="#c8844c" filter="url(#b3)"/><rect x="52.2" y="175.5" width="24.1" height="11.4" fill="#e0a060" filter="url(#b3)"/><rect x="1.0" y="170.5" width="27.1" height="16.4" fill="#3a1a12" filter="url(#b3)"/><rect x="4.0" y="102.3" width="8.0" height="40.1" fill="#b07c98" filter="url(#b3)"/><polygon points="35.1,80.2 52.2,90.3 52.2,134.4 35.1,128.4" fill="#4e2c66" filter="url(#b3)"/><polygon points="37.1,94.3 50.2,101.3 50.2,118.4 37.1,113.3" fill="#9a5a9c" filter="url(#b3)" opacity=".7"/><rect x="306.9" y="0.0" width="13.4" height="70.2" fill="#ff5050" filter="url(#b20)" opacity=".5"/><rect x="314.3" y="2.0" width="3.6" height="64.2" fill="#ffb0b0" filter="url(#b3)" opacity=".8"/><rect x="40.7" y="27.1" width="0.8" height="17.5" fill="#3a3420" /><rect x="45.7" y="27.1" width="0.8" height="17.5" fill="#3a3420" /><rect x="35.3" y="25.5" width="16.6" height="2.0" fill="#2c2618" /><rect x="275.5" y="37.1" width="0.8" height="13.4" fill="#3a3420" /><rect x="279.6" y="37.1" width="0.8" height="13.4" fill="#3a3420" /><rect x="271.0" y="35.5" width="13.8" height="2.0" fill="#2c2618" /><rect x="283.9" y="26.1" width="0.8" height="14.4" fill="#3a3420" /><rect x="287.4" y="26.1" width="0.8" height="14.4" fill="#3a3420" /><rect x="280.0" y="24.5" width="12.0" height="2.0" fill="#2c2618" /><rect x="302.0" y="39.1" width="0.8" height="15.4" fill="#3a3420" /><rect x="306.5" y="39.1" width="0.8" height="15.4" fill="#3a3420" /><rect x="297.1" y="37.5" width="15.0" height="2.0" fill="#2c2618" /><rect x="22.5" y="40.1" width="0.8" height="15.0" fill="#3a3420" /><rect x="26.3" y="40.1" width="0.8" height="15.0" fill="#3a3420" /><rect x="18.3" y="38.5" width="13.0" height="2.0" fill="#2c2618" /><rect x="132.4" y="77.2" width="2.0" height="12.0" fill="#e8e4dc" filter="url(#b3)"/><rect x="136.0" y="77.2" width="2.0" height="12.0" fill="#e8e4dc" filter="url(#b3)"/><rect x="139.6" y="77.2" width="2.0" height="12.0" fill="#e8e4dc" filter="url(#b3)"/><rect x="143.2" y="77.2" width="2.0" height="12.0" fill="#e8e4dc" filter="url(#b3)"/><polygon points="201.6,74.2 209.6,84.3 208.6,91.3 202.2,84.3" fill="#e8e0e0" filter="url(#b3)"/><polygon points="202.2,79.2 209.0,88.3 208.6,91.3 202.2,84.3" fill="#c83040" filter="url(#b3)"/><path d="M4.0 56.2L35.1 24.1" stroke="#7a6a3a" stroke-width="1.4" opacity=".8"/><path d="M268.8 22.1L320.4 36.1" stroke="#5a4a2a" stroke-width="1.4" opacity=".8"/><text x="10.4" y="6.8" font-size="7.5" fill="#8a3aa0" font-family="Liberation Sans,Noto Sans CJK JP,sans-serif" font-weight="700" >3F</text><text x="4.4" y="21.7" font-size="12" fill="#f2f2f2" font-family="Liberation Sans,Noto Sans CJK JP,sans-serif" font-weight="700" >焼肉</text><text x="15.6" y="45.1" font-size="24" fill="#f6ecec" text-anchor="middle" font-family="Liberation Sans,Noto Sans CJK JP,sans-serif" font-weight="700" opacity=".95">肉</text><text x="15.6" y="69.6" font-size="24" fill="#f6ecec" text-anchor="middle" font-family="Liberation Sans,Noto Sans CJK JP,sans-serif" font-weight="700" opacity=".95">の</text><text x="15.6" y="94.1" font-size="24" fill="#f6ecec" text-anchor="middle" font-family="Liberation Sans,Noto Sans CJK JP,sans-serif" font-weight="700" opacity=".95">亭</text><text x="12.0" y="124.0" font-size="13" fill="#e8e8e8" font-family="Liberation Sans,Noto Sans CJK JP,sans-serif" font-weight="700" >F</text><text x="94.7" y="39.1" font-size="6.2" fill="#d8281c" text-anchor="middle" font-family="Liberation Sans,Noto Sans CJK JP,sans-serif" font-weight="700" >ま</text><text x="94.7" y="45.5" font-size="6.2" fill="#d8281c" text-anchor="middle" font-family="Liberation Sans,Noto Sans CJK JP,sans-serif" font-weight="700" >ぐ</text><text x="94.7" y="51.9" font-size="6.2" fill="#d8281c" text-anchor="middle" font-family="Liberation Sans,Noto Sans CJK JP,sans-serif" font-weight="700" >ろ</text><text x="94.7" y="58.3" font-size="6.2" fill="#d8281c" text-anchor="middle" font-family="Liberation Sans,Noto Sans CJK JP,sans-serif" font-weight="700" >商</text><text x="94.7" y="64.7" font-size="6.2" fill="#d8281c" text-anchor="middle" font-family="Liberation Sans,Noto Sans CJK JP,sans-serif" font-weight="700" >店</text><text x="89.1" y="75.0" font-size="6" fill="#e8f0ff" font-family="Liberation Sans,Noto Sans CJK JP,sans-serif" font-weight="700" >B1F</text><text x="93.9" y="86.3" font-size="8" fill="#cc2a2a" text-anchor="middle" font-family="Liberation Sans,Noto Sans CJK JP,sans-serif" font-weight="700" >酒</text><text x="93.9" y="94.9" font-size="8" fill="#cc2a2a" text-anchor="middle" font-family="Liberation Sans,Noto Sans CJK JP,sans-serif" font-weight="700" >バ</text><text x="93.9" y="103.5" font-size="8" fill="#cc2a2a" text-anchor="middle" font-family="Liberation Sans,Noto Sans CJK JP,sans-serif" font-weight="700" >ル</text><text x="90.9" y="118.0" font-size="6.5" fill="#2a3a9a" font-family="Liberation Sans,Noto Sans CJK JP,sans-serif" font-weight="700" >J</text><text x="92.9" y="131.4" font-size="7.2" fill="#6a1608" text-anchor="middle" font-family="Liberation Sans,Noto Sans CJK JP,sans-serif" font-weight="700" >串</text><text x="92.9" y="139.0" font-size="7.2" fill="#6a1608" text-anchor="middle" font-family="Liberation Sans,Noto Sans CJK JP,sans-serif" font-weight="700" >カ</text><text x="92.9" y="146.6" font-size="7.2" fill="#6a1608" text-anchor="middle" font-family="Liberation Sans,Noto Sans CJK JP,sans-serif" font-weight="700" >ツ</text><text x="92.9" y="154.2" font-size="7.2" fill="#6a1608" text-anchor="middle" font-family="Liberation Sans,Noto Sans CJK JP,sans-serif" font-weight="700" >居</text><text x="92.9" y="161.8" font-size="7.2" fill="#6a1608" text-anchor="middle" font-family="Liberation Sans,Noto Sans CJK JP,sans-serif" font-weight="700" >酒</text><text x="92.9" y="169.4" font-size="7.2" fill="#6a1608" text-anchor="middle" font-family="Liberation Sans,Noto Sans CJK JP,sans-serif" font-weight="700" >屋</text><text x="142.0" y="98.3" font-size="9" fill="#d8202c" text-anchor="middle" font-family="Liberation Sans,Noto Sans CJK JP,sans-serif" font-weight="700" >カ</text><text x="142.0" y="107.9" font-size="9" fill="#d8202c" text-anchor="middle" font-family="Liberation Sans,Noto Sans CJK JP,sans-serif" font-weight="700" >ラ</text><text x="142.0" y="117.5" font-size="9" fill="#d8202c" text-anchor="middle" font-family="Liberation Sans,Noto Sans CJK JP,sans-serif" font-weight="700" >オ</text><text x="142.0" y="127.1" font-size="9" fill="#d8202c" text-anchor="middle" font-family="Liberation Sans,Noto Sans CJK JP,sans-serif" font-weight="700" >ケ</text><text x="142.0" y="136.7" font-size="9" fill="#d8202c" text-anchor="middle" font-family="Liberation Sans,Noto Sans CJK JP,sans-serif" font-weight="700" >館</text><text x="231.7" y="52.6" font-size="8" fill="#f0f0f0" text-anchor="middle" font-family="Liberation Sans,Noto Sans CJK JP,sans-serif" font-weight="700" >リ</text><text x="231.7" y="60.8" font-size="8" fill="#f0f0f0" text-anchor="middle" font-family="Liberation Sans,Noto Sans CJK JP,sans-serif" font-weight="700" >ラ</text><text x="231.7" y="69.0" font-size="8" fill="#f0f0f0" text-anchor="middle" font-family="Liberation Sans,Noto Sans CJK JP,sans-serif" font-weight="700" >ク</text><text x="224.3" y="36.5" font-size="9" fill="#5a4ab0" font-family="Liberation Sans,Noto Sans CJK JP,sans-serif" font-weight="700" >松島</text><text x="246.3" y="53.8" font-size="13.5" fill="#d8202c" font-family="Liberation Sans,Noto Sans CJK JP,sans-serif" font-weight="700" >焼肉</text><text x="246.3" y="63.0" font-size="5.2" fill="#d8202c" font-family="Liberation Sans,Noto Sans CJK JP,sans-serif" font-weight="700" >韓国料理</text><text x="245.9" y="71.0" font-size="5.2" fill="#b02020" font-family="Liberation Sans,Noto Sans CJK JP,sans-serif" font-weight="700" textLength="26" lengthAdjust="spacingAndGlyphs">サムギョプサル</text><text x="247.1" y="82.6" font-size="6.4" fill="#2a9a5a" font-family="Liberation Sans,Noto Sans CJK JP,sans-serif" font-weight="700" >KollaBo</text><text x="229.9" y="80.6" font-size="7.4" fill="#7a3a1c" font-family="Liberation Sans,Noto Sans CJK JP,sans-serif" font-weight="700" >麻雀</text><text x="225.9" y="84.3" font-size="5" fill="#d84030" text-anchor="middle" font-family="Liberation Sans,Noto Sans CJK JP,sans-serif" font-weight="700" >ク</text><text x="225.9" y="89.5" font-size="5" fill="#d84030" text-anchor="middle" font-family="Liberation Sans,Noto Sans CJK JP,sans-serif" font-weight="700" >ア</text><text x="225.9" y="94.7" font-size="5" fill="#d84030" text-anchor="middle" font-family="Liberation Sans,Noto Sans CJK JP,sans-serif" font-weight="700" >ト</text><text x="225.9" y="99.9" font-size="5" fill="#d84030" text-anchor="middle" font-family="Liberation Sans,Noto Sans CJK JP,sans-serif" font-weight="700" >ロ</text><text x="231.9" y="95.5" font-size="8" fill="#d86a20" font-family="Liberation Sans,Noto Sans CJK JP,sans-serif" font-weight="700" >2F</text><text x="232.7" y="110.3" font-size="10" fill="#e82a3c" text-anchor="middle" font-family="Liberation Sans,Noto Sans CJK JP,sans-serif" font-weight="700" >ダ</text><text x="232.7" y="119.7" font-size="10" fill="#e82a3c" text-anchor="middle" font-family="Liberation Sans,Noto Sans CJK JP,sans-serif" font-weight="700" >イ</text><text x="232.7" y="129.1" font-size="10" fill="#e82a3c" text-anchor="middle" font-family="Liberation Sans,Noto Sans CJK JP,sans-serif" font-weight="700" >ニ</text><text x="260.4" y="102.3" font-size="9.5" fill="#f6b0b8" text-anchor="middle" font-family="Liberation Sans,Noto Sans CJK JP,sans-serif" font-weight="700" >シ</text><text x="260.4" y="111.9" font-size="9.5" fill="#f6b0b8" text-anchor="middle" font-family="Liberation Sans,Noto Sans CJK JP,sans-serif" font-weight="700" >ャ</text><text x="260.4" y="121.5" font-size="9.5" fill="#f6b0b8" text-anchor="middle" font-family="Liberation Sans,Noto Sans CJK JP,sans-serif" font-weight="700" >ン</text><text x="260.4" y="131.1" font-size="9.5" fill="#f6b0b8" text-anchor="middle" font-family="Liberation Sans,Noto Sans CJK JP,sans-serif" font-weight="700" >テ</text><text x="233.7" y="134.4" font-size="7" fill="#2a2a2a" text-anchor="middle" font-family="Liberation Sans,Noto Sans CJK JP,sans-serif" font-weight="700" >う</text><text x="233.7" y="142.0" font-size="7" fill="#2a2a2a" text-anchor="middle" font-family="Liberation Sans,Noto Sans CJK JP,sans-serif" font-weight="700" >な</text><text x="233.7" y="149.6" font-size="7" fill="#2a2a2a" text-anchor="middle" font-family="Liberation Sans,Noto Sans CJK JP,sans-serif" font-weight="700" >ぎ</text><text x="271.8" y="164.5" font-size="7" fill="#2a2018" text-anchor="middle" font-family="Liberation Sans,Noto Sans CJK JP,sans-serif" font-weight="700" >お</text><text x="271.8" y="171.9" font-size="7" fill="#2a2018" text-anchor="middle" font-family="Liberation Sans,Noto Sans CJK JP,sans-serif" font-weight="700" >好</text><text x="271.8" y="179.3" font-size="7" fill="#2a2018" text-anchor="middle" font-family="Liberation Sans,Noto Sans CJK JP,sans-serif" font-weight="700" >み</text><text x="271.8" y="186.7" font-size="7" fill="#2a2018" text-anchor="middle" font-family="Liberation Sans,Noto Sans CJK JP,sans-serif" font-weight="700" >焼</text><text x="271.8" y="194.1" font-size="7" fill="#2a2018" text-anchor="middle" font-family="Liberation Sans,Noto Sans CJK JP,sans-serif" font-weight="700" >き</text><text x="257.8" y="162.5" font-size="5.5" fill="#d83020" text-anchor="middle" font-family="Liberation Sans,Noto Sans CJK JP,sans-serif" font-weight="700" >カ</text><text x="257.8" y="168.7" font-size="5.5" fill="#d83020" text-anchor="middle" font-family="Liberation Sans,Noto Sans CJK JP,sans-serif" font-weight="700" >ラ</text><text x="257.8" y="174.9" font-size="5.5" fill="#d83020" text-anchor="middle" font-family="Liberation Sans,Noto Sans CJK JP,sans-serif" font-weight="700" >オ</text><text x="257.8" y="181.1" font-size="5.5" fill="#d83020" text-anchor="middle" font-family="Liberation Sans,Noto Sans CJK JP,sans-serif" font-weight="700" >ケ</text><text x="231.7" y="170.5" font-size="7" fill="#f0e8e8" text-anchor="middle" font-family="Liberation Sans,Noto Sans CJK JP,sans-serif" font-weight="700" >く</text><text x="231.7" y="178.5" font-size="7" fill="#f0e8e8" text-anchor="middle" font-family="Liberation Sans,Noto Sans CJK JP,sans-serif" font-weight="700" >ろ</text><text x="300.9" y="80.2" font-size="6.5" fill="#a83a28" text-anchor="middle" font-family="Liberation Sans,Noto Sans CJK JP,sans-serif" font-weight="700" >炭</text><text x="300.9" y="89.2" font-size="6.5" fill="#a83a28" text-anchor="middle" font-family="Liberation Sans,Noto Sans CJK JP,sans-serif" font-weight="700" >火</text><text x="300.9" y="98.2" font-size="6.5" fill="#a83a28" text-anchor="middle" font-family="Liberation Sans,Noto Sans CJK JP,sans-serif" font-weight="700" >焼</text><text x="308.9" y="80.2" font-size="6.5" fill="#a83a28" text-anchor="middle" font-family="Liberation Sans,Noto Sans CJK JP,sans-serif" font-weight="700" >鳥</text><text x="308.9" y="89.2" font-size="6.5" fill="#a83a28" text-anchor="middle" font-family="Liberation Sans,Noto Sans CJK JP,sans-serif" font-weight="700" >料</text><text x="308.9" y="98.2" font-size="6.5" fill="#a83a28" text-anchor="middle" font-family="Liberation Sans,Noto Sans CJK JP,sans-serif" font-weight="700" >理</text><text x="182.5" y="100.3" font-size="5.5" fill="#c8d8ff" text-anchor="middle" font-family="Liberation Sans,Noto Sans CJK JP,sans-serif" font-weight="700" >パ</text><text x="182.5" y="106.3" font-size="5.5" fill="#c8d8ff" text-anchor="middle" font-family="Liberation Sans,Noto Sans CJK JP,sans-serif" font-weight="700" >チ</text><text x="182.5" y="112.3" font-size="5.5" fill="#c8d8ff" text-anchor="middle" font-family="Liberation Sans,Noto Sans CJK JP,sans-serif" font-weight="700" >ン</text><text x="182.5" y="118.3" font-size="5.5" fill="#c8d8ff" text-anchor="middle" font-family="Liberation Sans,Noto Sans CJK JP,sans-serif" font-weight="700" >コ</text><text x="193.2" y="90.3" font-size="5.5" fill="#f0d8a0" text-anchor="middle" font-family="Liberation Sans,Noto Sans CJK JP,sans-serif" font-weight="700" >居</text><text x="193.2" y="97.3" font-size="5.5" fill="#f0d8a0" text-anchor="middle" font-family="Liberation Sans,Noto Sans CJK JP,sans-serif" font-weight="700" >酒</text><text x="193.2" y="104.3" font-size="5.5" fill="#f0d8a0" text-anchor="middle" font-family="Liberation Sans,Noto Sans CJK JP,sans-serif" font-weight="700" >屋</text><text x="33.1" y="175.5" font-size="5" fill="#e8ffe8" font-family="Liberation Sans,Noto Sans CJK JP,sans-serif" font-weight="700" textLength="15" lengthAdjust="spacingAndGlyphs">FamilyMart</text></g></g></svg>
<!-- overlay -->
<div class="b" style="left:5px;top:2.2px;width:2px;height:980px;background:repeating-linear-gradient(180deg,#666 0,#666 3.6px,transparent 3.6px,transparent 8px)"></div><div class="b" style="left:1795px;top:0px;width:2px;height:982px;background:repeating-linear-gradient(180deg,#666 0,#666 3.7px,transparent 3.7px,transparent 8px)"></div>
</body></html>
